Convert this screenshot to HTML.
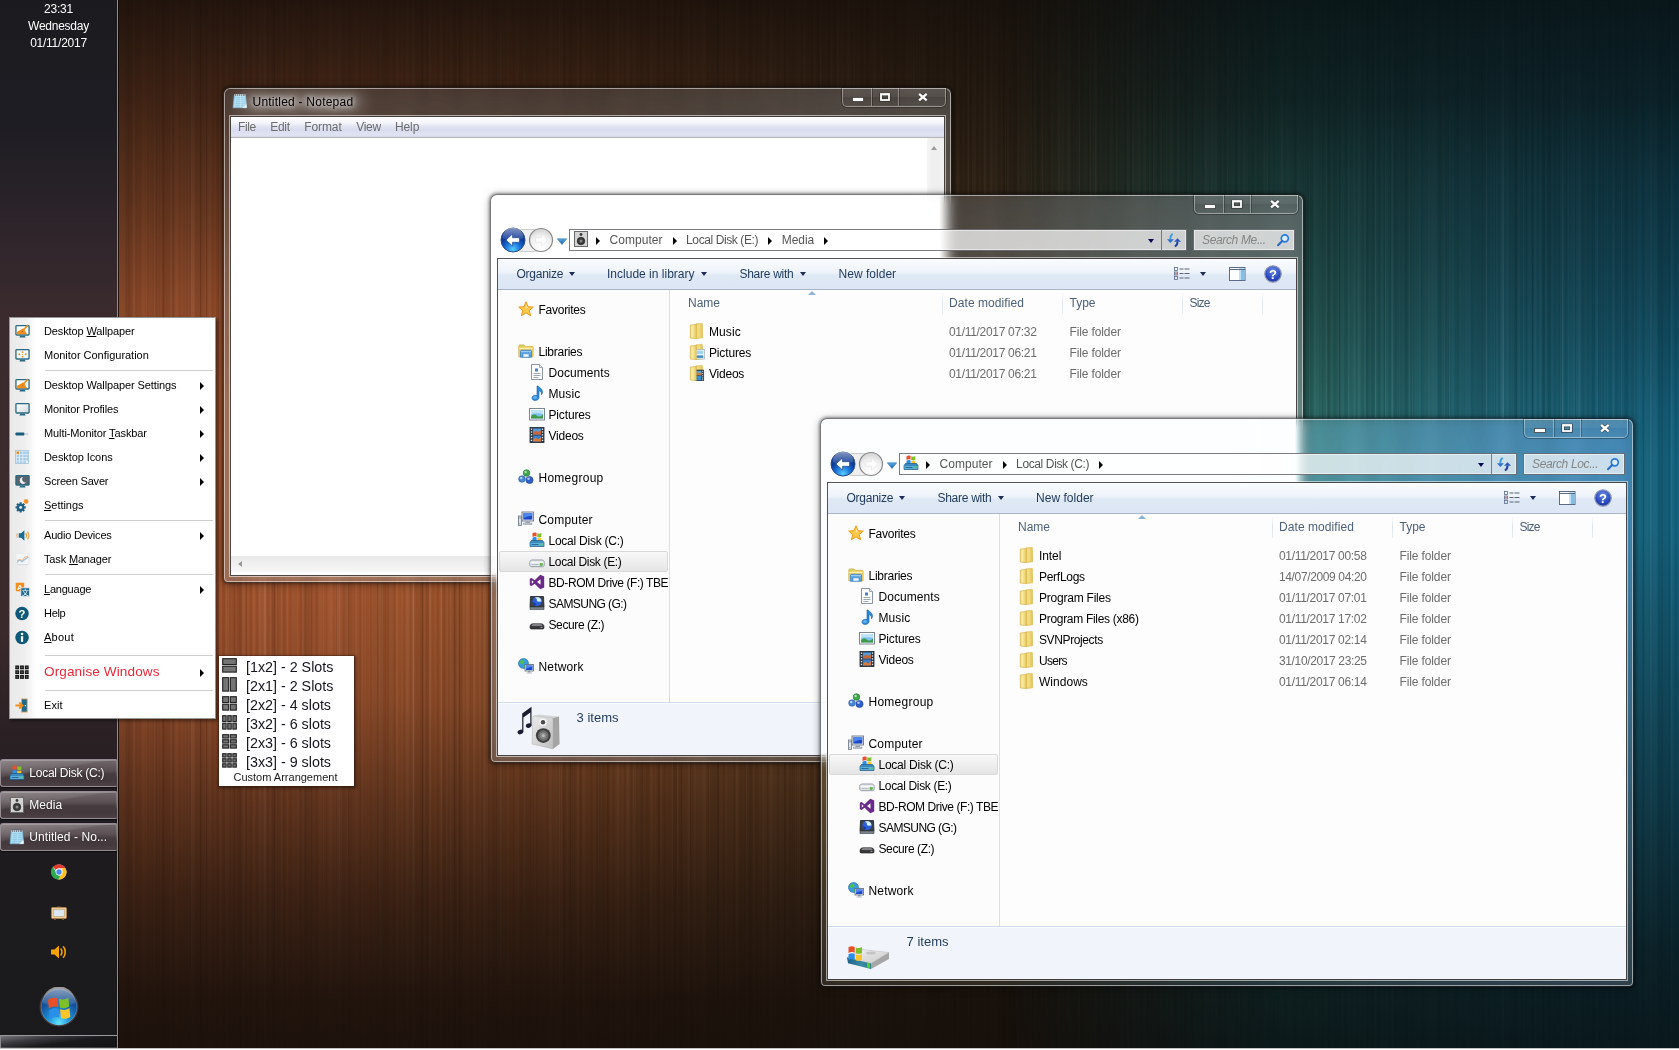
<!DOCTYPE html>
<html lang="en"><head><meta charset="utf-8"><title>Desktop</title>
<style>
*{box-sizing:border-box;margin:0;padding:0}
html,body{width:1679px;height:1050px;overflow:hidden;background:#120a07}
body{font-family:"Liberation Sans",sans-serif;font-size:12px;color:#000;position:relative}
.abs{position:absolute}
#wall{position:absolute;left:0;top:0;width:1679px;height:1050px;
 background:
  linear-gradient(180deg, rgba(19,13,9,.89) 0px, rgba(19,13,9,.68) 100px, rgba(19,13,9,.43) 200px, rgba(19,13,9,.15) 300px, rgba(19,13,9,.02) 400px, rgba(19,13,9,0) 470px, rgba(19,13,9,.03) 600px, rgba(19,13,9,.16) 700px, rgba(19,13,9,.46) 800px, rgba(19,13,9,.72) 900px, rgba(19,13,9,.9) 1000px, rgba(19,13,9,.93) 1050px),
  repeating-linear-gradient(90deg, rgba(255,255,255,0) 0px, rgba(255,255,255,.045) 1px, rgba(255,255,255,0) 2px, rgba(0,0,0,.05) 4px, rgba(0,0,0,0) 5px, rgba(255,255,255,.03) 7px, rgba(0,0,0,.06) 8px, rgba(0,0,0,0) 11px),
  repeating-linear-gradient(90deg, rgba(0,0,0,0) 0px, rgba(0,0,0,.07) 3px, rgba(255,255,255,.03) 5px, rgba(0,0,0,0) 9px, rgba(0,0,0,.05) 14px, rgba(255,255,255,.035) 15px, rgba(0,0,0,0) 17px),
  repeating-linear-gradient(90deg, transparent 0 6px, rgba(255,235,215,.065) 6px 7px, transparent 7px 15px, rgba(0,0,0,.10) 15px 16px, transparent 16px 22px, rgba(255,235,215,.045) 22px 24px, transparent 24px 37px),
  repeating-linear-gradient(90deg, transparent 0 9px, rgba(0,0,0,.09) 9px 11px, transparent 11px 28px, rgba(255,235,215,.07) 28px 29px, transparent 29px 41px, rgba(0,0,0,.08) 41px 42px, transparent 42px 59px),
  repeating-linear-gradient(90deg, rgba(0,0,0,0) 0px, rgba(0,0,0,.08) 19px, rgba(0,0,0,0) 31px, rgba(255,255,255,.03) 47px, rgba(0,0,0,.07) 53px, rgba(0,0,0,0) 73px),
  linear-gradient(90deg, #9a4c28 0px, #a8562d 350px, #914e25 600px, #684020 820px, #40301c 1000px, #33321f 1150px, #2c3a2c 1300px, #2c3a2c 1679px);}
#streaks{display:none}
#ex2{background:linear-gradient(90deg,rgba(255,255,255,0) 50%,rgba(255,255,255,.05) 85%,rgba(255,255,255,.06) 100%),rgba(235,248,255,.09);-webkit-backdrop-filter:blur(6px) brightness(1.3) saturate(1.05) hue-rotate(12deg);backdrop-filter:blur(6px) brightness(1.3) saturate(1.05) hue-rotate(12deg)}
#np{background:linear-gradient(90deg,rgba(255,255,255,0) 50%,rgba(255,255,255,.08) 85%,rgba(255,255,255,.10) 100%),rgba(255,255,255,.08);-webkit-backdrop-filter:blur(6px) brightness(1.22) saturate(.5);backdrop-filter:blur(6px) brightness(1.22) saturate(.5)}
#ex1{-webkit-backdrop-filter:blur(6px) brightness(1.2) saturate(.45);backdrop-filter:blur(6px) brightness(1.2) saturate(.45)}
#wallR{position:absolute;left:0;top:0;width:1679px;height:1050px;
 -webkit-mask-image:linear-gradient(90deg,transparent 1000px,#000 1290px);mask-image:linear-gradient(90deg,transparent 1000px,#000 1290px);
 background:
  linear-gradient(180deg, rgba(8,17,19,.93) 0px, rgba(8,17,19,.80) 100px, rgba(8,17,19,.60) 180px, rgba(8,17,19,.45) 260px, rgba(8,17,19,.27) 340px, rgba(8,17,19,.08) 410px, rgba(8,17,19,0) 460px, rgba(8,17,19,0) 530px, rgba(8,17,19,.22) 650px, rgba(8,17,19,.5) 800px, rgba(8,17,19,.8) 950px, rgba(8,17,19,.9) 1040px),
  repeating-linear-gradient(90deg, rgba(255,255,255,0) 0px, rgba(255,255,255,.045) 1px, rgba(255,255,255,0) 2px, rgba(0,0,0,.05) 4px, rgba(0,0,0,0) 5px, rgba(255,255,255,.03) 7px, rgba(0,0,0,.06) 8px, rgba(0,0,0,0) 11px),
  repeating-linear-gradient(90deg, rgba(0,0,0,0) 0px, rgba(0,0,0,.07) 3px, rgba(255,255,255,.03) 5px, rgba(0,0,0,0) 9px, rgba(0,0,0,.05) 14px, rgba(255,255,255,.035) 15px, rgba(0,0,0,0) 17px),
  repeating-linear-gradient(90deg, transparent 0 6px, rgba(255,235,215,.065) 6px 7px, transparent 7px 15px, rgba(0,0,0,.10) 15px 16px, transparent 16px 22px, rgba(255,235,215,.045) 22px 24px, transparent 24px 37px),
  repeating-linear-gradient(90deg, transparent 0 9px, rgba(0,0,0,.09) 9px 11px, transparent 11px 28px, rgba(255,235,215,.07) 28px 29px, transparent 29px 41px, rgba(0,0,0,.08) 41px 42px, transparent 42px 59px),
  repeating-linear-gradient(90deg, rgba(0,0,0,0) 0px, rgba(0,0,0,.08) 19px, rgba(0,0,0,0) 31px, rgba(255,255,255,.03) 47px, rgba(0,0,0,.07) 53px, rgba(0,0,0,0) 73px),
  linear-gradient(90deg, #2b6d66 0px, #2b6d66 1300px, #1d6575 1480px, #10617f 1679px);}
#bottomline{position:absolute;left:0;top:1048px;width:1679px;height:2px;background:linear-gradient(180deg,#9a9a9a,#fff 60%)}

/* sidebar */
#side{position:absolute;left:0;top:0;width:118px;height:1048px;border-right:1px solid #8e8c92;box-shadow:1px 0 0 rgba(14,7,4,.8);
 background:linear-gradient(180deg,#1b1b1f 0%,#1e1d23 12%,#2c242a 21%,#3b2b2e 30%,#3d2c2e 45%,#3a2a2c 60%,#2b2125 70%,#1d1b1e 80%,#1a1a1d 100%);}
#clock{position:absolute;left:0;top:1px;width:117px;text-align:center;color:#fff;font-size:12px;line-height:17px;letter-spacing:-.25px}
.tb{position:absolute;left:0;width:117px;height:28px;border:1px solid #948c90;border-right-color:transparent;border-radius:3px 0 0 3px;color:#fff;font-size:12px;
 background:linear-gradient(171deg,rgba(255,255,255,.20) 0%,rgba(255,255,255,.10) 36%,rgba(255,255,255,0) 41%),linear-gradient(180deg,#71676b 0%,#5a5054 40%,#463c40 55%,#44393d 80%,#4c4246 100%);box-shadow:inset 0 1px 0 rgba(255,255,255,.22),0 1px 1px rgba(0,0,0,.6)}
.tb .ic{position:absolute;left:8px;top:5px}
.tb .tx{position:absolute;left:28.300px;top:6px;white-space:nowrap;text-shadow:0 0 2px rgba(0,0,0,.5)}
#sidebot{position:absolute;left:0;top:1035px;width:117px;height:13px;border-top:1px solid #9a9a9e;border-left:1px solid #8a8a8e;background:linear-gradient(172deg,#77777c 0%,#3c3c40 28%,#19191c 55%,#121214 100%);box-shadow:inset 0 -1px 0 rgba(255,255,255,.18)}

/* windows */
.win{position:absolute;border-radius:7px 7px 5px 5px;border:1px solid rgba(10,8,7,.55);
 box-shadow:inset 0 0 0 1px rgba(255,255,255,.52), 0 0 3px 1px rgba(0,0,0,.35), 0 1px 9px rgba(0,0,0,.35);
 background:linear-gradient(90deg,rgba(255,255,255,0) 50%,rgba(255,255,255,.07) 80%,rgba(255,255,255,.09) 100%),rgba(255,255,255,.10);-webkit-backdrop-filter:blur(6px) brightness(1.22) saturate(.62);backdrop-filter:blur(6px) brightness(1.22) saturate(.62)}
.client{position:absolute;background:#fff;box-shadow:0 0 0 1px rgba(40,34,32,.78),0 0 0 2px rgba(255,255,255,.55)}
.caps{position:absolute;top:0;height:19px;width:104px;border:1px solid rgba(255,255,255,.38);border-top:none;border-radius:0 0 5px 5px;box-shadow:0 0 0 1px rgba(0,0,0,.3);display:flex;background:linear-gradient(180deg,rgba(255,255,255,.10) 0%,rgba(255,255,255,.06) 48%,rgba(255,255,255,0) 52%,rgba(255,255,255,.03) 100%)}
.caps div{height:100%;border-right:1px solid rgba(255,255,255,.33);box-shadow:1px 0 0 rgba(0,0,0,.25);position:relative}
.caps div:last-child{border-right:none;box-shadow:none}
.caps svg{position:absolute}
.tglow{position:absolute;background:rgba(255,255,255,.34);border-radius:8px;filter:blur(8px)}
.title{position:absolute;margin-top:1px;white-space:nowrap;font-size:12px;color:#000;text-shadow:0 0 5px rgba(255,255,255,.9),0 0 8px rgba(255,255,255,.7),0 0 12px rgba(255,255,255,.5)}

/* explorer */
.addr{position:absolute;height:22px;border:1px solid rgba(40,44,50,.62);background:rgba(255,255,255,.72);box-shadow:inset 0 0 0 1px rgba(255,255,255,.5)}
.crumb{position:absolute;top:3px;font-size:12px;color:#555;white-space:nowrap;text-align:center}
.tri{position:absolute;width:0;height:0;margin-top:-.5px;border-left:4.500px solid #000;border-top:4px solid transparent;border-bottom:4px solid transparent}
.cmd{position:absolute;left:0;top:0;width:100%;height:31px;background:linear-gradient(180deg,#fafcfe 0%,#eef3fa 45%,#dfe8f5 55%,#dde6f4 100%);border-bottom:1px solid #a8b5c8;color:#1e395b;font-size:12px}
.cmd>span{position:absolute;top:8px;white-space:nowrap}
.dn{position:absolute;width:0;height:0;border-top:4.500px solid #1c2c55;border-left:3.750px solid transparent;border-right:3.750px solid transparent}
.nav{position:absolute;left:0;top:31px;width:171px;background:#fcfcfd;overflow:hidden}
.navdiv{position:absolute;left:171px;top:31px;width:1px;background:#d6e0ee}
.ni{position:absolute;left:0;width:171px;height:21px;white-space:nowrap;font-size:12px;color:#000}
.ni .ic{position:absolute;top:2px}
.ni .tx{position:absolute;top:3px}
.ni.sel{left:1px;width:169px;border:1px solid #d9d9d9;border-radius:2px;background:linear-gradient(180deg,#f8f8f8,#e5e5e5)}
.list{position:absolute;left:172px;top:31px;background:#fdfdfe}
.hd{position:absolute;top:6px;font-size:12px;color:#4c607a;white-space:nowrap}
.hdiv{position:absolute;top:1px;width:1px;height:23px;background:linear-gradient(180deg,#fff,#dfe5ee 50%,#e8ecf2)}
.row{position:absolute;left:0;margin-top:1px;height:21px;width:100%;font-size:12px;white-space:nowrap}
.row .ic{position:absolute;left:18.500px;top:.5px}
.row .nm{position:absolute;left:39px;top:3px;color:#000}
.row .dt{position:absolute;left:279px;top:3px;color:#6d6d6d}
.row .ty{position:absolute;left:399.500px;top:3px;color:#6d6d6d}
.det{position:absolute;left:0;width:100%;height:53px;background:#f1f5fb;border-top:1px solid #cfdcec;box-shadow:inset 0 1px 0 #fafcff}
.det .tx{position:absolute;left:78.500px;top:7px;font-size:13px;color:#1e395b}

/* menus */
#menu{position:absolute;left:9px;top:317px;width:207px;height:402px;background:#fff;border:1px solid #979797;box-shadow:2px 2px 3px rgba(0,0,0,.45)}
#menu .gut{position:absolute;left:0;top:0;width:26px;height:100%;background:linear-gradient(90deg,#e9e9e9 0,#efefef 55%,#f6f6f6 80%,#fff 100%)}
.mi{position:absolute;left:34px;font-size:11px;white-space:nowrap;color:#000;letter-spacing:-.12px}
.mic{position:absolute;left:5px}
.msep{position:absolute;left:35px;width:168px;height:1px;background:#cfcfcf}
.marr{position:absolute;left:190px;width:0;height:0;border-left:4px solid #000;border-top:4px solid transparent;border-bottom:4px solid transparent}
#sub{position:absolute;left:219px;top:656px;width:135px;height:130px;background:#fff;box-shadow:0 0 0 1px rgba(60,30,15,.35),1px 1px 3px 1px rgba(0,0,0,.45)}
.si{position:absolute;left:27px;font-size:14.3px;white-space:nowrap;color:#15151f}
.sic{position:absolute;left:3.300px}
u{text-decoration:underline;text-underline-offset:1px}
</style></head>
<body>
<div id="wall"></div><div id="wallR"></div>
<div id="side"><div id="clock">23:31<br>Wednesday<br>01/11/2017</div><div class="tb" style="top:759px"><div class="ic"><svg width="16" height="16" viewBox="0 0 16 16" style="display:block;"><g transform="translate(3.5,0) scale(0.95)"><path d="M0 1.200c1.500-.9 3-.9 4.300-.2v4C3 4.300 1.500 4.300 0 5.200z" fill="#e8502a"/><path d="M5 1.300c1.300.6 2.800.7 4.300-.2v4c-1.500.9-3 .8-4.300.2z" fill="#7cc02a"/><path d="M0 6c1.500-.9 3-.9 4.300-.2v4C3 9.100 1.500 9.100 0 10z" fill="#2a8fe8"/><path d="M5 6.100c1.300.6 2.800.7 4.300-.2v4c-1.500.9-3 .8-4.300.2z" fill="#fbc52a"/></g><path d="M1 10.500l1.500-2h11l1.500 2v4H1z" fill="#3a8ac0" stroke="#1f5a88" stroke-width=".7"/><rect x="1.500" y="11" width="13" height="3" fill="#5ab0d8"/><rect x="11.500" y="11.700" width="2" height="1.600" fill="#4fd04a"/><path d="M2.500 12.500h7" stroke="#2a6a98" stroke-width="1"/></svg></div><div class="tx"><span style="letter-spacing:-0.245px">Local Disk (C:)</span></div></div><div class="tb" style="top:791px"><div class="ic"><svg width="16" height="16" viewBox="0 0 16 16" style="display:block;"><rect x="1.500" y=".5" width="13" height="15" fill="#d4d4d4" stroke="#6a6a6a" stroke-width="1"/><circle cx="8" cy="10" r="3.800" fill="#3a3a3a" stroke="#1a1a1a" stroke-width=".6"/><circle cx="8" cy="10" r="1.500" fill="#8a8a8a"/><circle cx="8" cy="3.500" r="1.400" fill="#3a3a3a"/></svg></div><div class="tx"><span style="letter-spacing:0.063px">Media</span></div></div><div class="tb" style="top:823px"><div class="ic"><svg width="16" height="16" viewBox="0 0 16 16" style="display:block;"><path d="M2.300 2.200h11.200l1.200 12.600H1z" fill="#a9dbf1" stroke="#78aecb" stroke-width=".7"/><path d="M2.400 4.600h11.300M2.200 6.600h11.700M2 8.600h12M1.900 10.600h12.300M1.700 12.600h12.700" stroke="#86c4e2" stroke-width=".7"/><path d="M4 2.500l-1.500 12M8.500 2.500v12" stroke="#c4e8f8" stroke-width=".8" opacity=".7"/><path d="M2.300 1.200h11.200v1.600H2.300z" fill="#e6eef2"/><path d="M3.300 .4v2.600M5.300 .4v2.600M7.300 .4v2.600M9.300 .4v2.600M11.300 .4v2.600M12.800 .4v2.600" stroke="#47525c" stroke-width=".8"/><path d="M10.200 14.800l4.500 0-.4-3.800z" fill="#fdfdfd"/><path d="M10.200 14.800l4.100-3.800" stroke="#9ac0d4" stroke-width=".5"/></svg></div><div class="tx"><span style="letter-spacing:0.075px">Untitled - No...</span></div></div><div class="abs" style="left:51px;top:864px"><svg width="16" height="16" viewBox="0 0 16 16" style="display:block;"><circle cx="8" cy="8" r="7.500" fill="#e8e8e8"/><path d="M8 .5a7.500 7.500 0 0 1 6.500 3.750H8A3.750 3.750 0 0 0 4.750 6.100L2 2.700A7.500 7.500 0 0 1 8 .5z" fill="#e33b2e"/><path d="M14.500 4.250A7.500 7.500 0 0 1 7.300 15.470L10.900 10A3.750 3.750 0 0 0 11.250 6.100V4.250z" fill="#fbc116"/><path d="M2 2.700L5 8.500c.5 2 2.500 3.500 4.500 3l-2.200 3.970A7.500 7.500 0 0 1 2 2.700z" fill="#2da94f"/><circle cx="8" cy="8" r="3.400" fill="#fff"/><circle cx="8" cy="8" r="2.700" fill="#4a8af4"/></svg></div><div class="abs" style="left:51px;top:906px"><svg width="16" height="14" viewBox="0 0 16 14" style="display:block;"><rect x=".5" y="1.500" width="15" height="11" rx="1" fill="#f0cc94" stroke="#b8864a" stroke-width=".7"/><rect x="2.800" y="3.600" width="10.400" height="6.800" fill="#dbe8f4" stroke="#a89878" stroke-width=".5"/><path d="M6 1.500L7.500 .3M10 1.500L8.800 .3" stroke="#c8a070" stroke-width=".6"/><rect x="3" y="12.500" width="2" height="1.200" fill="#8a6a3a"/><rect x="11" y="12.500" width="2" height="1.200" fill="#8a6a3a"/></svg></div><div class="abs" style="left:50px;top:944px"><svg width="18" height="16" viewBox="0 0 18 16" style="display:block;"><path d="M1 5.500h3.500L9 1.500v13L4.500 10.500H1z" fill="#f5a300"/><path d="M11 5c1.200 1.500 1.200 4.500 0 6" stroke="#f5a300" stroke-width="1.600" fill="none" stroke-linecap="round"/><path d="M13.500 2.800c2.300 2.700 2.300 7.700 0 10.400" stroke="#f5a300" stroke-width="1.600" fill="none" stroke-linecap="round"/></svg></div><div class="abs" style="left:39px;top:987px"><svg width="40" height="40" viewBox="0 0 40 40" style="display:block;"><defs><radialGradient id="og" cx=".5" cy=".92" r=".95"><stop offset="0" stop-color="#63e4ff"/><stop offset=".3" stop-color="#1f93d8"/><stop offset=".62" stop-color="#15539c"/><stop offset="1" stop-color="#143a72"/></radialGradient><linearGradient id="oh" x1="0" y1="0" x2="0" y2="1"><stop offset="0" stop-color="#fff" stop-opacity=".55"/><stop offset="1" stop-color="#fff" stop-opacity=".05"/></linearGradient></defs><circle cx="20" cy="20" r="18.800" fill="url(#og)" stroke="#4a3a36" stroke-width="1.200"/><circle cx="20" cy="20" r="17.800" fill="none" stroke="#9ad0f0" stroke-opacity=".35" stroke-width=".8"/><path d="M3.500 16a16.500 16.500 0 0 1 33 0c-10 4.500-23 4.500-33 0z" fill="url(#oh)"/><g transform="rotate(-6 20 20)"><g transform="translate(9.8,9) scale(2.2)"><path d="M0 1.200c1.500-.9 3-.9 4.300-.2v4C3 4.300 1.500 4.300 0 5.200z" fill="#e8502a"/><path d="M5 1.300c1.300.6 2.800.7 4.300-.2v4c-1.500.9-3 .8-4.300.2z" fill="#7cc02a"/><path d="M0 6c1.500-.9 3-.9 4.300-.2v4C3 9.100 1.500 9.100 0 10z" fill="#2a8fe8"/><path d="M5 6.100c1.300.6 2.800.7 4.300-.2v4c-1.500.9-3 .8-4.300.2z" fill="#fbc52a"/></g></g></svg></div><div id="sidebot"></div></div>
<div class="win" id="np" style="left:223px;top:87px;width:729px;height:496px"><div class="abs" style="left:8px;top:5px"><svg width="16" height="16" viewBox="0 0 16 16" style="display:block;"><path d="M2.300 2.200h11.200l1.200 12.600H1z" fill="#a9dbf1" stroke="#78aecb" stroke-width=".7"/><path d="M2.400 4.600h11.300M2.200 6.600h11.700M2 8.600h12M1.900 10.600h12.300M1.700 12.600h12.700" stroke="#86c4e2" stroke-width=".7"/><path d="M4 2.500l-1.500 12M8.500 2.500v12" stroke="#c4e8f8" stroke-width=".8" opacity=".7"/><path d="M2.300 1.200h11.200v1.600H2.300z" fill="#e6eef2"/><path d="M3.300 .4v2.600M5.300 .4v2.600M7.300 .4v2.600M9.300 .4v2.600M11.300 .4v2.600M12.800 .4v2.600" stroke="#47525c" stroke-width=".8"/><path d="M10.200 14.800l4.500 0-.4-3.800z" fill="#fdfdfd"/><path d="M10.200 14.800l4.100-3.800" stroke="#9ac0d4" stroke-width=".5"/></svg></div><div class="abs" style="left:0;top:0;width:100%;height:27px;overflow:hidden;border-radius:6px 6px 0 0"><div class="tglow" style="left:14px;top:6px;width:124px;height:16px"></div></div><div class="title" style="left:28.5px;top:6px;letter-spacing:0.227px">Untitled - Notepad</div><div class="caps" style="left:618px"><svg width="103" height="19" style="left:0;top:0"><rect x="9.500" y="9.500" width="11" height="4" fill="#fff" stroke="#303030" stroke-opacity=".7" stroke-width="1"/><rect x="38" y="6.500" width="8" height="5.500" fill="none" stroke="#303030" stroke-opacity=".7" stroke-width="3.600"/><rect x="38" y="6.500" width="8" height="5.500" fill="none" stroke="#fff" stroke-width="1.800"/><rect x="37.100" y="5.200" width="9.800" height="1.800" fill="#fff"/><path d="M76.100 5.900l7.600 6.500M83.700 5.900l-7.600 6.500" stroke="#303030" stroke-opacity=".7" stroke-width="3.800"/><path d="M76.100 5.900l7.600 6.500M83.700 5.900l-7.600 6.500" stroke="#fff" stroke-width="2.400"/></svg><div style="width:29px"></div><div style="width:27px"></div><div style="width:46px"></div></div><div class="client" style="left:7px;top:29px;width:713px;height:458px"><div class="abs" style="left:0;top:0;width:100%;height:21px;background:linear-gradient(180deg,#ffffff 0%,#f5f6fb 28%,#dfe3f1 50%,#d8dcee 62%,#dfe3f2 90%,#d4d8e8 100%);border-bottom:1px solid #b6b6b6"></div><div class="abs" style="left:7px;top:3px;color:#6d6d6d;font-size:12px;letter-spacing:-0.384px">File</div><div class="abs" style="left:39.30000000000001px;top:3px;color:#6d6d6d;font-size:12px;letter-spacing:-0.320px">Edit</div><div class="abs" style="left:73.19999999999999px;top:3px;color:#6d6d6d;font-size:12px;letter-spacing:-0.084px">Format</div><div class="abs" style="left:125.30000000000001px;top:3px;color:#6d6d6d;font-size:12px;letter-spacing:-0.324px">View</div><div class="abs" style="left:164px;top:3px;color:#6d6d6d;font-size:12px;letter-spacing:-0.120px">Help</div><div class="abs" style="left:696px;top:21px;width:17px;height:418px;background:linear-gradient(90deg,#f6f6f6,#efefef 30%,#f0f0f0)"></div><div class="abs" style="left:699.500px;top:29px;width:0;height:0;border-bottom:4px solid #9a9a9a;border-left:3.500px solid transparent;border-right:3.500px solid transparent"></div><div class="abs" style="left:0;top:439px;width:696px;height:16px;background:linear-gradient(180deg,#e9e9e9,#efefef 40%,#f6f6f6)"></div><div class="abs" style="left:696px;top:439px;width:17px;height:19px;background:#f3f3f3"></div><div class="abs" style="left:7px;top:444px;width:0;height:0;border-right:4px solid #9a9a9a;border-top:3.500px solid transparent;border-bottom:3.500px solid transparent"></div></div></div>
<div class="win" id="ex1" style="left:490px;top:194px;width:814px;height:569px"><div class="caps" style="left:703px"><svg width="103" height="19" style="left:0;top:0"><rect x="9.500" y="9.500" width="11" height="4" fill="#fff" stroke="#303030" stroke-opacity=".7" stroke-width="1"/><rect x="38" y="6.500" width="8" height="5.500" fill="none" stroke="#303030" stroke-opacity=".7" stroke-width="3.600"/><rect x="38" y="6.500" width="8" height="5.500" fill="none" stroke="#fff" stroke-width="1.800"/><rect x="37.100" y="5.200" width="9.800" height="1.800" fill="#fff"/><path d="M76.100 5.900l7.600 6.500M83.700 5.900l-7.600 6.500" stroke="#303030" stroke-opacity=".7" stroke-width="3.800"/><path d="M76.100 5.900l7.600 6.500M83.700 5.900l-7.600 6.500" stroke="#fff" stroke-width="2.400"/></svg><div style="width:29px"></div><div style="width:27px"></div><div style="width:46px"></div></div><div class="abs" style="left:21px;top:34px;width:32px;height:23px;background:rgba(228,228,228,.55);border-radius:11px;border:1px solid rgba(160,160,160,.45)"></div><div class="abs" style="left:9px;top:32px"><svg width="26" height="26" viewBox="0 0 26 26" style="display:block;"><defs><radialGradient id="bg1" cx=".5" cy=".9" r=".9"><stop offset="0" stop-color="#55d0ff"/><stop offset=".35" stop-color="#1a6fd8"/><stop offset=".62" stop-color="#0d3a9c"/><stop offset="1" stop-color="#1a3a88"/></radialGradient><linearGradient id="bh" x1="0" y1="0" x2="0" y2="1"><stop offset="0" stop-color="#fff" stop-opacity=".85"/><stop offset="1" stop-color="#fff" stop-opacity=".15"/></linearGradient></defs><circle cx="13" cy="13" r="12" fill="url(#bg1)" stroke="#2a4a8a" stroke-width="1"/><path d="M2.500 11a10.500 10.500 0 0 1 21 0c-6 3-15 3-21 0z" fill="url(#bh)" opacity=".55"/><path d="M6 13l6.500-6v3.700h7v4.600h-7V19z" fill="#fff" stroke="#1a3a7a" stroke-width=".6" stroke-linejoin="round"/></svg></div><div class="abs" style="left:37px;top:32px"><svg width="26" height="26" viewBox="0 0 26 26" style="display:block;"><defs><radialGradient id="fg1" cx=".5" cy=".8" r=".8"><stop offset="0" stop-color="#fff"/><stop offset=".6" stop-color="#f0f0f0"/><stop offset="1" stop-color="#d0d0d0"/></radialGradient></defs><circle cx="13" cy="13" r="11.500" fill="url(#fg1)" stroke="#8a8a8a" stroke-width="1.200"/><path d="M20 13l-6.500-6v3.700h-6v4.600h6V19z" fill="#fcfcfc" stroke="#e6e6e6" stroke-width=".7" stroke-linejoin="round"/></svg></div><div class="abs" style="left:66px;top:43px"><svg width="10" height="7" viewBox="0 0 10 7" style="display:block;"><defs><linearGradient id="ndg" x1="0" y1="0" x2="0" y2="1"><stop offset="0" stop-color="#5ab0ea"/><stop offset="1" stop-color="#1a5ab0"/></linearGradient></defs><path d="M.3 .8h9.400L5 6.500z" fill="url(#ndg)" stroke="#1f5fa8" stroke-width=".5"/></svg></div><div class="addr" style="left:78px;top:34px;width:618px"><div class="abs" style="left:3px;top:1px"><svg width="16" height="16" viewBox="0 0 16 16" style="display:block;"><rect x="1.500" y=".5" width="13" height="15" fill="#d4d4d4" stroke="#6a6a6a" stroke-width="1"/><circle cx="8" cy="10" r="3.800" fill="#3a3a3a" stroke="#1a1a1a" stroke-width=".6"/><circle cx="8" cy="10" r="1.500" fill="#8a8a8a"/><circle cx="8" cy="3.500" r="1.400" fill="#3a3a3a"/></svg></div><div class="tri" style="left:26px;top:7px"></div><div class="crumb" style="left:39.5px;width:53px;letter-spacing:0.039px">Computer</div><div class="tri" style="left:102.60000000000002px;top:7px"></div><div class="crumb" style="left:116.10000000000002px;width:72px;letter-spacing:-0.401px">Local Disk (E:)</div><div class="tri" style="left:198.20000000000005px;top:7px"></div><div class="crumb" style="left:211.70000000000005px;width:32.5px;letter-spacing:-0.037px">Media</div><div class="tri" style="left:254.30000000000007px;top:7px"></div><div class="abs" style="left:578px;top:9px;width:0;height:0;border-top:4px solid #0a0a52;border-left:3.500px solid transparent;border-right:3.500px solid transparent"></div><div class="abs" style="left:591px;top:0;width:1px;height:20px;background:rgba(90,94,100,.75)"></div><div class="abs" style="left:596px;top:2px"><svg width="16" height="16" viewBox="0 0 16 16" style="display:block;"><path d="M6.800 2c-1.700.7-2.500 2.500-2.500 5.500" stroke="#4a9ce0" stroke-width="2" fill="none"/><path d="M.9 7.200h7l-3.500 3.900z" fill="#2f72cc"/><path d="M11.500 9.500c0 2.700-.9 4.300-2.700 4.900" stroke="#26429c" stroke-width="2" fill="none"/><path d="M8 9.800h7l-3.500-3.600z" fill="#2a56c0"/></svg></div></div><div class="addr" style="left:702px;top:34px;width:102px"><div class="abs" style="left:8px;top:3px;font-style:italic;color:#858585;font-size:12px;white-space:nowrap;letter-spacing:-.35px">Search Me...</div><div class="abs" style="left:81px;top:2px"><svg width="16" height="16" viewBox="0 0 16 16" style="display:block;"><circle cx="9.800" cy="6.300" r="3.500" fill="#dcecfb" stroke="#2a7ad8" stroke-width="1.700"/><path d="M7.200 9L3 13.300" stroke="#2a6ac8" stroke-width="2" stroke-linecap="round"/></svg></div></div><div class="client" style="left:7px;top:64px;width:798px;height:496px"><div class="cmd"><span style="left:18.5px"><span style="letter-spacing:-0.249px">Organize</span></span><div class="dn" style="left:71px;top:13px"></div><span style="left:109px"><span style="letter-spacing:0.007px">Include in library</span></span><div class="dn" style="left:203px;top:13px"></div><span style="left:241.5px"><span style="letter-spacing:-0.280px">Share with</span></span><div class="dn" style="left:302px;top:13px"></div><span style="left:340.5px"><span style="letter-spacing:0.024px">New folder</span></span><div class="abs" style="left:676px;top:8px"><svg width="17" height="14" viewBox="0 0 17 14" style="display:block;"><g fill="none" stroke="#5a6a8a" stroke-width=".8"><rect x=".5" y=".5" width="3" height="3"/><rect x=".5" y="5" width="3" height="3"/><rect x=".5" y="9.500" width="3" height="3"/></g><rect x="1.300" y="5.800" width="1.400" height="1.400" fill="#d05a3a"/><g stroke="#5a6478" stroke-width="1"><path d="M5.500 2h4M10.500 2h5M5.500 6.500h4M10.500 6.500h5M5.500 11h4M10.500 11h5"/></g></svg></div><div class="dn" style="left:702px;top:13px"></div><div class="abs" style="left:731px;top:7px"><svg width="17" height="16" viewBox="0 0 17 16" style="display:block;"><rect x=".5" y="1.500" width="15.500" height="13" fill="#fff" stroke="#5a6a88" stroke-width="1"/><rect x="10" y="2.500" width="5.500" height="11.500" fill="#7fc0ea"/><rect x="10" y="2.500" width="2" height="11.500" fill="#bfe2f8"/><path d="M.5 3.500h15.500" stroke="#5a6a88" stroke-width="1"/></svg></div><div class="abs" style="left:766px;top:6px"><svg width="18" height="18" viewBox="0 0 18 18" style="display:block;"><defs><radialGradient id="hg" cx=".5" cy=".3" r=".8"><stop offset="0" stop-color="#6a8ae8"/><stop offset=".6" stop-color="#2a4ac0"/><stop offset="1" stop-color="#1a2a88"/></radialGradient></defs><circle cx="9" cy="9" r="8.200" fill="url(#hg)" stroke="#8a96b8" stroke-width="1.200"/><text x="9" y="13.500" text-anchor="middle" font-family="Liberation Sans" font-weight="bold" font-size="13" fill="#fff">?</text></svg></div></div><div class="nav" style="height:412px"><div class="ni" style="top:9px"><div class="ic" style="left:20px;top:2px"><svg width="16" height="16" viewBox="0 0 16 16" style="display:block;"><path d="M8 .8l2.1 4.9 5.2.4-4 3.4 1.3 5.2L8 11.9l-4.6 2.8 1.3-5.2-4-3.4 5.2-.4z" fill="#fdc848" stroke="#e89a1c" stroke-width="1" stroke-linejoin="round"/><path d="M8 3.2l1.3 3 .9.1-2.2 1.5z" fill="#fff3c0" opacity=".8"/></svg></div><div class="tx" style="left:40.5px;top:4px"><span style="letter-spacing:-0.261px">Favorites</span></div></div><div class="ni" style="top:51px"><div class="ic" style="left:20px;top:2px"><svg width="16" height="16" viewBox="0 0 16 16" style="display:block;"><path d="M.8 2.800c0-.5.400-.9.900-.9h4.300l1.200 1.500h7c.5 0 .9.400.9.900v9.500H.8z" fill="#f3d66a" stroke="#cfa83c" stroke-width=".7"/><path d="M1.500 2.600h4.200l.8 1H1.500z" fill="#a8cc5a"/><path d="M1.300 5.500h13.400" stroke="#fdf0b4" stroke-width=".9"/><path d="M2.500 8.200c0-.6.500-1 1-1h9c.5 0 1 .4 1 1v6H2.500z" fill="#5aa6e6" stroke="#2f78c4" stroke-width=".7"/><path d="M3 8.600h10" stroke="#a8d4f8" stroke-width=".9"/><path d="M5 10.800h6v3.400H5z" fill="#eef6fd" stroke="#3a82cc" stroke-width=".6"/></svg></div><div class="tx" style="left:40.5px;top:4px"><span style="letter-spacing:-0.247px">Libraries</span></div></div><div class="ni" style="top:72px"><div class="ic" style="left:31px;top:2px"><svg width="16" height="16" viewBox="0 0 16 16" style="display:block;"><path d="M2.5 .5h8l3 3v12h-11z" fill="#fff" stroke="#8a95a3" stroke-width="1"/><path d="M10.5 .5v3h3" fill="#e4e9ef" stroke="#8a95a3" stroke-width=".8"/><rect x="6" y="4.5" width="3" height="3" fill="#4a7fd0"/><path d="M4.5 9.5h7M4.5 11.5h7M4.5 13.5h5" stroke="#9aa5b5" stroke-width="1"/></svg></div><div class="tx" style="left:50.5px;top:4px"><span style="letter-spacing:0.067px">Documents</span></div></div><div class="ni" style="top:93px"><div class="ic" style="left:31px;top:2px"><svg width="16" height="16" viewBox="0 0 16 16" style="display:block;"><path d="M9 1c1.5 2 4.5 2.500 4.500 6 0 1-.3 2-1 2.800.5-2.800-1.500-4-2.500-4.300V12.500c0 1.700-1.800 3-3.800 3S3 14.500 3 13s1.500-2.700 3.500-2.700c.6 0 1 .1 1.500.3V1z" fill="#2e8bdc" stroke="#1660a8" stroke-width=".6"/><ellipse cx="6" cy="12.500" rx="2" ry="1.200" fill="#7cc4f5" opacity=".7"/></svg></div><div class="tx" style="left:50.5px;top:4px"><span style="letter-spacing:0.093px">Music</span></div></div><div class="ni" style="top:114px"><div class="ic" style="left:31px;top:2px"><svg width="16" height="16" viewBox="0 0 16 16" style="display:block;"><rect x=".5" y="2.500" width="15" height="11.500" fill="#fff" stroke="#7c8794" stroke-width="1"/><rect x="2" y="4" width="12" height="8.500" fill="#7ec0ee"/><path d="M2 10.500c2-2.500 4-2.500 6-.8s4 .8 6-1.200v4H2z" fill="#3f9b4a"/><path d="M2 8c3-1 9-1 12 0V4H2z" fill="#bfe2f8"/></svg></div><div class="tx" style="left:50.5px;top:4px"><span style="letter-spacing:-0.156px">Pictures</span></div></div><div class="ni" style="top:135px"><div class="ic" style="left:31px;top:2px"><svg width="16" height="16" viewBox="0 0 16 16" style="display:block;"><rect x="1" y=".5" width="14" height="15" fill="#2b3644" stroke="#1a222c" stroke-width=".8"/><rect x="4" y="1.500" width="8" height="6" fill="#4f9de0"/><rect x="4" y="8.500" width="8" height="6" fill="#3c7fc8"/><path d="M4 5.500l3-2 2 1.500 3-2v4.500H4z" fill="#c8673a"/><path d="M4 13l2.500-2.500 2.500 2 3-2.500v4.500H4z" fill="#d87a3c"/><g fill="#dfe6ee"><rect x="1.800" y="1.500" width="1.400" height="1.400"/><rect x="1.800" y="4.300" width="1.400" height="1.400"/><rect x="1.800" y="7.100" width="1.400" height="1.400"/><rect x="1.800" y="9.900" width="1.400" height="1.400"/><rect x="1.800" y="12.700" width="1.400" height="1.400"/><rect x="12.800" y="1.500" width="1.400" height="1.400"/><rect x="12.800" y="4.300" width="1.400" height="1.400"/><rect x="12.800" y="7.100" width="1.400" height="1.400"/><rect x="12.800" y="9.900" width="1.400" height="1.400"/><rect x="12.800" y="12.700" width="1.400" height="1.400"/></g></svg></div><div class="tx" style="left:50.5px;top:4px"><span style="letter-spacing:-0.229px">Videos</span></div></div><div class="ni" style="top:177px"><div class="ic" style="left:20px;top:2px"><svg width="16" height="16" viewBox="0 0 16 16" style="display:block;"><circle cx="8.500" cy="4" r="3.300" fill="#3fa64a" stroke="#1f7030" stroke-width=".6"/><circle cx="4" cy="10" r="3.300" fill="#4a86d8" stroke="#2258a8" stroke-width=".6"/><circle cx="11.500" cy="11" r="3.600" fill="#2f5fc8" stroke="#1a3c90" stroke-width=".6"/><circle cx="7.600" cy="3" r="1.200" fill="#c8f0c8" opacity=".8"/><circle cx="3.200" cy="9" r="1.200" fill="#d4e6fb" opacity=".8"/><circle cx="10.500" cy="9.800" r="1.300" fill="#cfdcf8" opacity=".8"/></svg></div><div class="tx" style="left:40.5px;top:4px"><span style="letter-spacing:0.255px">Homegroup</span></div></div><div class="ni" style="top:219px"><div class="ic" style="left:20px;top:2px"><svg width="16" height="16" viewBox="0 0 16 16" style="display:block;"><rect x="4" y="1" width="11.500" height="9" fill="#e8edf2" stroke="#6a7686" stroke-width=".9"/><rect x="5.300" y="2.300" width="9" height="6.300" fill="#1c48c8"/><path d="M5.300 2.300h9v2.500c-3 0-6 1-9 2.500z" fill="#4f86ee"/><rect x="7.500" y="10.500" width="4.500" height="1.500" fill="#9aa5b3"/><rect x="5.500" y="12" width="8.500" height="1.500" fill="#c8d0da" stroke="#7c8896" stroke-width=".5"/><rect x=".5" y="5" width="3" height="9.500" fill="#dfe5ec" stroke="#6a7686" stroke-width=".8"/><rect x="1.200" y="6.500" width="1.600" height=".8" fill="#5a6a7a"/><rect x="1.200" y="12.300" width="1" height="1" fill="#3ec04a"/></svg></div><div class="tx" style="left:40.5px;top:4px"><span style="letter-spacing:0.189px">Computer</span></div></div><div class="ni" style="top:240px"><div class="ic" style="left:31px;top:2px"><svg width="16" height="16" viewBox="0 0 16 16" style="display:block;"><g transform="translate(3.5,0) scale(0.95)"><path d="M0 1.200c1.500-.9 3-.9 4.300-.2v4C3 4.300 1.500 4.300 0 5.200z" fill="#e8502a"/><path d="M5 1.300c1.300.6 2.800.7 4.300-.2v4c-1.500.9-3 .8-4.300.2z" fill="#7cc02a"/><path d="M0 6c1.500-.9 3-.9 4.300-.2v4C3 9.100 1.500 9.100 0 10z" fill="#2a8fe8"/><path d="M5 6.100c1.300.6 2.800.7 4.300-.2v4c-1.500.9-3 .8-4.300.2z" fill="#fbc52a"/></g><path d="M1 10.500l1.500-2h11l1.500 2v4H1z" fill="#3a8ac0" stroke="#1f5a88" stroke-width=".7"/><rect x="1.500" y="11" width="13" height="3" fill="#5ab0d8"/><rect x="11.500" y="11.700" width="2" height="1.600" fill="#4fd04a"/><path d="M2.500 12.500h7" stroke="#2a6a98" stroke-width="1"/></svg></div><div class="tx" style="left:50.5px;top:4px"><span style="letter-spacing:-0.245px">Local Disk (C:)</span></div></div><div class="ni sel" style="top:261px"><div class="ic" style="left:29px;top:1px"><svg width="16" height="16" viewBox="0 0 16 16" style="display:block;"><path d="M.8 9.500c0-1.500 1-2.500 2.500-2.500h9.400c1.500 0 2.500 1 2.500 2.500v2.500c0 1-.7 1.700-1.700 1.700h-11c-1 0-1.700-.7-1.700-1.700z" fill="#e6e9ec" stroke="#8a929c" stroke-width=".9"/><path d="M1.500 9.800h13" stroke="#fff" stroke-width="1"/><rect x="11" y="10.500" width="2.500" height="2" fill="#5ac83c" stroke="#3a8a28" stroke-width=".4"/><path d="M2.500 11.500h7" stroke="#b8bec6" stroke-width="1.200"/></svg></div><div class="tx" style="left:48.5px;top:3px"><span style="letter-spacing:-0.335px">Local Disk (E:)</span></div></div><div class="ni" style="top:282px"><div class="ic" style="left:31px;top:2px"><svg width="16" height="16" viewBox="0 0 16 16" style="display:block;"><path d="M11.300 .8L15.200 2.400v11.200L11.300 15.200 5.600 9.800 2.600 12.100.8 11.200V4.800l1.800-.9 3 2.300zM11.500 5.200L8.100 8l3.400 2.800zM2.800 6.300v3.400L4.700 8z" fill="#6a2a8a" fill-rule="evenodd"/></svg></div><div class="tx" style="left:50.5px;top:4px"><span style="letter-spacing:-0.417px">BD-ROM Drive (F:) TBE</span></div></div><div class="ni" style="top:303px"><div class="ic" style="left:31px;top:2px"><svg width="16" height="16" viewBox="0 0 16 16" style="display:block;"><path d="M1.500 1.500h13l.5 10.500H1z" fill="#3a4048" stroke="#1c2026" stroke-width=".8"/><path d="M1 12h14v2.500H1z" fill="#7a828c" stroke="#3a4048" stroke-width=".6"/><circle cx="8" cy="6.500" r="4.600" fill="#2a5fd8"/><path d="M8 1.900a4.600 4.600 0 0 1 4.600 4.600c-2 .5-3.500-.5-4.600-2s-2-2-3-.8A4.600 4.600 0 0 1 8 1.900z" fill="#bfe0f5"/><circle cx="9.500" cy="5" r="1.800" fill="#eaf6ff" opacity=".9"/><path d="M4 7l3 1.500-1 2.300A4.600 4.600 0 0 1 4 7z" fill="#1438a8"/></svg></div><div class="tx" style="left:50.5px;top:4px"><span style="letter-spacing:-0.556px">SAMSUNG (G:)</span></div></div><div class="ni" style="top:324px"><div class="ic" style="left:31px;top:2px"><svg width="16" height="16" viewBox="0 0 16 16" style="display:block;"><path d="M1 10.500c0-1.500 1.200-2.700 3-2.700h8c1.800 0 3 1.200 3 2.700v1.200c0 .8-.5 1.300-1.300 1.300H2.300c-.8 0-1.300-.5-1.300-1.300z" fill="#3a3a3c" stroke="#1a1a1c" stroke-width=".6"/><path d="M2.500 9.500c.5-.8 1.200-1 2-1h7c.8 0 1.500.2 2 1z" fill="#c8ccd0"/><rect x="11.500" y="10.800" width="2" height="1.200" fill="#8a8f96"/></svg></div><div class="tx" style="left:50.5px;top:4px"><span style="letter-spacing:-0.392px">Secure (Z:)</span></div></div><div class="ni" style="top:366px"><div class="ic" style="left:20px;top:2px"><svg width="16" height="16" viewBox="0 0 16 16" style="display:block;"><circle cx="5.500" cy="5.500" r="5" fill="#3a9ae0" stroke="#1f6ab0" stroke-width=".6"/><path d="M3 2c1.500-.5 3 0 3.500 1.500S5 6 3.500 6 1.500 4 3 2zM6 7.500c1-.5 2.500 0 2.500 1S7 10.500 6 10s-1-2 0-2.500z" fill="#4fc04a"/><rect x="7" y="6.500" width="8.500" height="6.500" fill="#e4e9ef" stroke="#5a6674" stroke-width=".8"/><rect x="8" y="7.500" width="6.500" height="4.500" fill="#1c48d0"/><path d="M8 7.500h6.500v1.500c-2 0-4.500.8-6.500 2z" fill="#4f86ee"/><rect x="10" y="13" width="2.500" height="1.500" fill="#8a95a3"/><rect x="8.500" y="14.500" width="5.500" height="1" fill="#b8c0ca"/></svg></div><div class="tx" style="left:40.5px;top:4px"><span style="letter-spacing:0.170px">Network</span></div></div></div><div class="navdiv" style="height:412px"></div><div class="list" style="width:626px;height:412px"><div class="hd" style="left:18px"><span style="letter-spacing:-0.003px">Name</span></div><div class="hd" style="left:279px"><span style="letter-spacing:0.074px">Date modified</span></div><div class="hd" style="left:399.5px"><span style="letter-spacing:-0.004px">Type</span></div><div class="hd" style="left:519.5px"><span style="letter-spacing:-0.836px">Size</span></div><div class="hdiv" style="left:272px"></div><div class="hdiv" style="left:392px"></div><div class="hdiv" style="left:512px"></div><div class="hdiv" style="left:592px"></div><div class="abs" style="left:138px;top:1px;width:0;height:0;border-bottom:4px solid #8fb2d6;border-left:4px solid transparent;border-right:4px solid transparent"></div><div class="row" style="top:31px"><div class="ic"><svg width="16" height="16" viewBox="0 0 16 16" style="display:block;"><defs><linearGradient id="fld1" x1="0" x2="1"><stop offset="0" stop-color="#efd777"/><stop offset=".35" stop-color="#f9eba4"/><stop offset=".7" stop-color="#f1db7c"/><stop offset="1" stop-color="#e8c95e"/></linearGradient></defs><path d="M7 .9l6.300-.3.300 14.200-6.600.6z" fill="#f1db80" stroke="#d8b64a" stroke-width=".7"/><path d="M11.300 1.200l1.600-.1.200 13.300-1.800.2z" fill="#e2c258" opacity=".7"/><path d="M1.300 2.100L7.200 1.400v14.200L1.300 15z" fill="url(#fld1)" stroke="#d6b34a" stroke-width=".7"/></svg></div><div class="nm"><span style="letter-spacing:0.093px">Music</span></div><div class="dt"><span style="letter-spacing:-0.315px">01/11/2017 07:32</span></div><div class="ty"><span style="letter-spacing:-0.126px">File folder</span></div></div><div class="row" style="top:52px"><div class="ic"><svg width="16" height="16" viewBox="0 0 16 16" style="display:block;"><defs><linearGradient id="fld2" x1="0" x2="1"><stop offset="0" stop-color="#efd777"/><stop offset=".35" stop-color="#f9eba4"/><stop offset=".7" stop-color="#f1db7c"/><stop offset="1" stop-color="#e8c95e"/></linearGradient></defs><path d="M7 .9l6.300-.3.300 14.200-6.600.6z" fill="#f1db80" stroke="#d8b64a" stroke-width=".7"/><path d="M11.300 1.200l1.600-.1.200 13.300-1.800.2z" fill="#e2c258" opacity=".7"/><rect x="6.500" y="5.500" width="8.800" height="9.500" fill="#fff" stroke="#9aa4b0" stroke-width=".7"/><rect x="7.500" y="6.600" width="6.800" height="3.400" fill="#9fd4f2"/><rect x="7.500" y="10" width="6.800" height="1.600" fill="#e8f4fa"/><rect x="7.500" y="11.400" width="6.800" height="2.500" fill="#3f8fc0"/><path d="M1.300 2.100L7.200 1.400v14.200L1.300 15z" fill="url(#fld2)" stroke="#d6b34a" stroke-width=".7"/></svg></div><div class="nm"><span style="letter-spacing:-0.156px">Pictures</span></div><div class="dt"><span style="letter-spacing:-0.315px">01/11/2017 06:21</span></div><div class="ty"><span style="letter-spacing:-0.126px">File folder</span></div></div><div class="row" style="top:73px"><div class="ic"><svg width="16" height="16" viewBox="0 0 16 16" style="display:block;"><defs><linearGradient id="fld3" x1="0" x2="1"><stop offset="0" stop-color="#efd777"/><stop offset=".35" stop-color="#f9eba4"/><stop offset=".7" stop-color="#f1db7c"/><stop offset="1" stop-color="#e8c95e"/></linearGradient></defs><path d="M7 .9l6.300-.3.300 14.200-6.600.6z" fill="#f1db80" stroke="#d8b64a" stroke-width=".7"/><path d="M11.300 1.200l1.600-.1.200 13.300-1.800.2z" fill="#e2c258" opacity=".7"/><rect x="6.500" y="5" width="8.300" height="10.800" fill="#2b3440" stroke="#1a222c" stroke-width=".5"/><rect x="7" y="5.800" width="5.500" height="4.500" fill="#4fa5e0"/><rect x="7" y="11" width="5.500" height="4.300" fill="#2f8fd0"/><path d="M7 9l2-2 1.500 1.500 2-1.500v3.300H7z" fill="#c87a4a"/><g fill="#e4e9ee"><rect x="13.200" y="5.800" width="1" height="1.100"/><rect x="13.200" y="8" width="1" height="1.100"/><rect x="13.200" y="10.200" width="1" height="1.100"/><rect x="13.200" y="12.400" width="1" height="1.100"/><rect x="13.200" y="14.300" width="1" height="1"/></g><path d="M1.300 2.100L7.200 1.400v14.200L1.300 15z" fill="url(#fld3)" stroke="#d6b34a" stroke-width=".7"/></svg></div><div class="nm"><span style="letter-spacing:-0.229px">Videos</span></div><div class="dt"><span style="letter-spacing:-0.315px">01/11/2017 06:21</span></div><div class="ty"><span style="letter-spacing:-0.126px">File folder</span></div></div></div><div class="det" style="top:443px"><div class="abs" style="left:18px;top:2px"><svg width="46" height="46" viewBox="0 0 46 46" style="display:block;"><defs><linearGradient id="spf" x1="0" y1="0" x2="1" y2="1"><stop offset="0" stop-color="#ececec"/><stop offset="1" stop-color="#bdbdbd"/></linearGradient></defs><g fill="#1c1c30"><ellipse cx="4.400" cy="27" rx="2.900" ry="2.200" transform="rotate(-20 4.400 27)"/><ellipse cx="12.700" cy="20.600" rx="2.900" ry="2.200" transform="rotate(-20 12.700 20.600)"/><path d="M6.200 26.800V8.600l9.300-6.800v18.400h-1.200V7.400L7.400 12.400v14.400z"/></g><path d="M17 11l6-1.600 20 2.100-6 1.500z" fill="#d6d6d6"/><path d="M37 13l6-1.500.6 27.500-6.600 5z" fill="#a4a4a4"/><path d="M17 11l20 2v31l-21-5z" fill="url(#spf)" stroke="#b0b0b0" stroke-width=".5"/><circle cx="27" cy="17.300" r="3.700" fill="#f6f6f6"/><circle cx="27" cy="17.300" r="2.200" fill="#4a4a4a"/><circle cx="27.300" cy="30.600" r="7.400" fill="#3e3e3e"/><circle cx="27.300" cy="30.600" r="5.300" fill="#6e6e6e"/><circle cx="27.300" cy="30.600" r="3.200" fill="#8a8a8a"/><circle cx="27.300" cy="30.600" r="1.500" fill="#b8b8b8"/></svg></div><div class="tx"><span style="letter-spacing:0.028px">3 items</span></div></div></div></div>
<div class="win" id="ex2" style="left:820px;top:418px;width:814px;height:569px"><div class="caps" style="left:703px"><svg width="103" height="19" style="left:0;top:0"><rect x="9.500" y="9.500" width="11" height="4" fill="#fff" stroke="#303030" stroke-opacity=".7" stroke-width="1"/><rect x="38" y="6.500" width="8" height="5.500" fill="none" stroke="#303030" stroke-opacity=".7" stroke-width="3.600"/><rect x="38" y="6.500" width="8" height="5.500" fill="none" stroke="#fff" stroke-width="1.800"/><rect x="37.100" y="5.200" width="9.800" height="1.800" fill="#fff"/><path d="M76.100 5.900l7.600 6.500M83.700 5.900l-7.600 6.500" stroke="#303030" stroke-opacity=".7" stroke-width="3.800"/><path d="M76.100 5.900l7.600 6.500M83.700 5.900l-7.600 6.500" stroke="#fff" stroke-width="2.400"/></svg><div style="width:29px"></div><div style="width:27px"></div><div style="width:46px"></div></div><div class="abs" style="left:21px;top:34px;width:32px;height:23px;background:rgba(228,228,228,.55);border-radius:11px;border:1px solid rgba(160,160,160,.45)"></div><div class="abs" style="left:9px;top:32px"><svg width="26" height="26" viewBox="0 0 26 26" style="display:block;"><defs><radialGradient id="bg1" cx=".5" cy=".9" r=".9"><stop offset="0" stop-color="#55d0ff"/><stop offset=".35" stop-color="#1a6fd8"/><stop offset=".62" stop-color="#0d3a9c"/><stop offset="1" stop-color="#1a3a88"/></radialGradient><linearGradient id="bh" x1="0" y1="0" x2="0" y2="1"><stop offset="0" stop-color="#fff" stop-opacity=".85"/><stop offset="1" stop-color="#fff" stop-opacity=".15"/></linearGradient></defs><circle cx="13" cy="13" r="12" fill="url(#bg1)" stroke="#2a4a8a" stroke-width="1"/><path d="M2.500 11a10.500 10.500 0 0 1 21 0c-6 3-15 3-21 0z" fill="url(#bh)" opacity=".55"/><path d="M6 13l6.500-6v3.700h7v4.600h-7V19z" fill="#fff" stroke="#1a3a7a" stroke-width=".6" stroke-linejoin="round"/></svg></div><div class="abs" style="left:37px;top:32px"><svg width="26" height="26" viewBox="0 0 26 26" style="display:block;"><defs><radialGradient id="fg1" cx=".5" cy=".8" r=".8"><stop offset="0" stop-color="#fff"/><stop offset=".6" stop-color="#f0f0f0"/><stop offset="1" stop-color="#d0d0d0"/></radialGradient></defs><circle cx="13" cy="13" r="11.500" fill="url(#fg1)" stroke="#8a8a8a" stroke-width="1.200"/><path d="M20 13l-6.500-6v3.700h-6v4.600h6V19z" fill="#fcfcfc" stroke="#e6e6e6" stroke-width=".7" stroke-linejoin="round"/></svg></div><div class="abs" style="left:66px;top:43px"><svg width="10" height="7" viewBox="0 0 10 7" style="display:block;"><defs><linearGradient id="ndg" x1="0" y1="0" x2="0" y2="1"><stop offset="0" stop-color="#5ab0ea"/><stop offset="1" stop-color="#1a5ab0"/></linearGradient></defs><path d="M.3 .8h9.400L5 6.500z" fill="url(#ndg)" stroke="#1f5fa8" stroke-width=".5"/></svg></div><div class="addr" style="left:78px;top:34px;width:618px"><div class="abs" style="left:3px;top:1px"><svg width="16" height="16" viewBox="0 0 16 16" style="display:block;"><g transform="translate(3.5,0) scale(0.95)"><path d="M0 1.200c1.500-.9 3-.9 4.300-.2v4C3 4.300 1.500 4.300 0 5.200z" fill="#e8502a"/><path d="M5 1.300c1.300.6 2.800.7 4.300-.2v4c-1.500.9-3 .8-4.300.2z" fill="#7cc02a"/><path d="M0 6c1.500-.9 3-.9 4.300-.2v4C3 9.100 1.500 9.100 0 10z" fill="#2a8fe8"/><path d="M5 6.100c1.300.6 2.800.7 4.300-.2v4c-1.500.9-3 .8-4.300.2z" fill="#fbc52a"/></g><path d="M1 10.500l1.500-2h11l1.500 2v4H1z" fill="#3a8ac0" stroke="#1f5a88" stroke-width=".7"/><rect x="1.500" y="11" width="13" height="3" fill="#5ab0d8"/><rect x="11.500" y="11.700" width="2" height="1.600" fill="#4fd04a"/><path d="M2.500 12.500h7" stroke="#2a6a98" stroke-width="1"/></svg></div><div class="tri" style="left:26px;top:7px"></div><div class="crumb" style="left:39.5px;width:53px;letter-spacing:0.039px">Computer</div><div class="tri" style="left:102.60000000000002px;top:7px"></div><div class="crumb" style="left:116.10000000000002px;width:73px;letter-spacing:-0.379px">Local Disk (C:)</div><div class="tri" style="left:199.20000000000005px;top:7px"></div><div class="abs" style="left:578px;top:9px;width:0;height:0;border-top:4px solid #0a0a52;border-left:3.500px solid transparent;border-right:3.500px solid transparent"></div><div class="abs" style="left:591px;top:0;width:1px;height:20px;background:rgba(90,94,100,.75)"></div><div class="abs" style="left:596px;top:2px"><svg width="16" height="16" viewBox="0 0 16 16" style="display:block;"><path d="M6.800 2c-1.700.7-2.500 2.500-2.500 5.500" stroke="#4a9ce0" stroke-width="2" fill="none"/><path d="M.9 7.200h7l-3.500 3.900z" fill="#2f72cc"/><path d="M11.500 9.500c0 2.700-.9 4.300-2.700 4.900" stroke="#26429c" stroke-width="2" fill="none"/><path d="M8 9.800h7l-3.500-3.600z" fill="#2a56c0"/></svg></div></div><div class="addr" style="left:702px;top:34px;width:102px"><div class="abs" style="left:8px;top:3px;font-style:italic;color:#858585;font-size:12px;white-space:nowrap;letter-spacing:-.35px">Search Loc...</div><div class="abs" style="left:81px;top:2px"><svg width="16" height="16" viewBox="0 0 16 16" style="display:block;"><circle cx="9.800" cy="6.300" r="3.500" fill="#dcecfb" stroke="#2a7ad8" stroke-width="1.700"/><path d="M7.200 9L3 13.300" stroke="#2a6ac8" stroke-width="2" stroke-linecap="round"/></svg></div></div><div class="client" style="left:7px;top:64px;width:798px;height:496px"><div class="cmd"><span style="left:18.5px"><span style="letter-spacing:-0.249px">Organize</span></span><div class="dn" style="left:71px;top:13px"></div><span style="left:109.5px"><span style="letter-spacing:-0.280px">Share with</span></span><div class="dn" style="left:170px;top:13px"></div><span style="left:208px"><span style="letter-spacing:0.024px">New folder</span></span><div class="abs" style="left:676px;top:8px"><svg width="17" height="14" viewBox="0 0 17 14" style="display:block;"><g fill="none" stroke="#5a6a8a" stroke-width=".8"><rect x=".5" y=".5" width="3" height="3"/><rect x=".5" y="5" width="3" height="3"/><rect x=".5" y="9.500" width="3" height="3"/></g><rect x="1.300" y="5.800" width="1.400" height="1.400" fill="#d05a3a"/><g stroke="#5a6478" stroke-width="1"><path d="M5.500 2h4M10.500 2h5M5.500 6.500h4M10.500 6.500h5M5.500 11h4M10.500 11h5"/></g></svg></div><div class="dn" style="left:702px;top:13px"></div><div class="abs" style="left:731px;top:7px"><svg width="17" height="16" viewBox="0 0 17 16" style="display:block;"><rect x=".5" y="1.500" width="15.500" height="13" fill="#fff" stroke="#5a6a88" stroke-width="1"/><rect x="10" y="2.500" width="5.500" height="11.500" fill="#7fc0ea"/><rect x="10" y="2.500" width="2" height="11.500" fill="#bfe2f8"/><path d="M.5 3.500h15.500" stroke="#5a6a88" stroke-width="1"/></svg></div><div class="abs" style="left:766px;top:6px"><svg width="18" height="18" viewBox="0 0 18 18" style="display:block;"><defs><radialGradient id="hg" cx=".5" cy=".3" r=".8"><stop offset="0" stop-color="#6a8ae8"/><stop offset=".6" stop-color="#2a4ac0"/><stop offset="1" stop-color="#1a2a88"/></radialGradient></defs><circle cx="9" cy="9" r="8.200" fill="url(#hg)" stroke="#8a96b8" stroke-width="1.200"/><text x="9" y="13.500" text-anchor="middle" font-family="Liberation Sans" font-weight="bold" font-size="13" fill="#fff">?</text></svg></div></div><div class="nav" style="height:412px"><div class="ni" style="top:9px"><div class="ic" style="left:20px;top:2px"><svg width="16" height="16" viewBox="0 0 16 16" style="display:block;"><path d="M8 .8l2.1 4.9 5.2.4-4 3.4 1.3 5.2L8 11.9l-4.6 2.8 1.3-5.2-4-3.4 5.2-.4z" fill="#fdc848" stroke="#e89a1c" stroke-width="1" stroke-linejoin="round"/><path d="M8 3.2l1.3 3 .9.1-2.2 1.5z" fill="#fff3c0" opacity=".8"/></svg></div><div class="tx" style="left:40.5px;top:4px"><span style="letter-spacing:-0.261px">Favorites</span></div></div><div class="ni" style="top:51px"><div class="ic" style="left:20px;top:2px"><svg width="16" height="16" viewBox="0 0 16 16" style="display:block;"><path d="M.8 2.800c0-.5.400-.9.900-.9h4.300l1.200 1.500h7c.5 0 .9.400.9.900v9.500H.8z" fill="#f3d66a" stroke="#cfa83c" stroke-width=".7"/><path d="M1.500 2.600h4.200l.8 1H1.500z" fill="#a8cc5a"/><path d="M1.300 5.500h13.400" stroke="#fdf0b4" stroke-width=".9"/><path d="M2.500 8.200c0-.6.500-1 1-1h9c.5 0 1 .4 1 1v6H2.500z" fill="#5aa6e6" stroke="#2f78c4" stroke-width=".7"/><path d="M3 8.600h10" stroke="#a8d4f8" stroke-width=".9"/><path d="M5 10.800h6v3.400H5z" fill="#eef6fd" stroke="#3a82cc" stroke-width=".6"/></svg></div><div class="tx" style="left:40.5px;top:4px"><span style="letter-spacing:-0.247px">Libraries</span></div></div><div class="ni" style="top:72px"><div class="ic" style="left:31px;top:2px"><svg width="16" height="16" viewBox="0 0 16 16" style="display:block;"><path d="M2.5 .5h8l3 3v12h-11z" fill="#fff" stroke="#8a95a3" stroke-width="1"/><path d="M10.5 .5v3h3" fill="#e4e9ef" stroke="#8a95a3" stroke-width=".8"/><rect x="6" y="4.5" width="3" height="3" fill="#4a7fd0"/><path d="M4.5 9.5h7M4.5 11.5h7M4.5 13.5h5" stroke="#9aa5b5" stroke-width="1"/></svg></div><div class="tx" style="left:50.5px;top:4px"><span style="letter-spacing:0.067px">Documents</span></div></div><div class="ni" style="top:93px"><div class="ic" style="left:31px;top:2px"><svg width="16" height="16" viewBox="0 0 16 16" style="display:block;"><path d="M9 1c1.5 2 4.5 2.500 4.500 6 0 1-.3 2-1 2.800.5-2.800-1.500-4-2.500-4.300V12.500c0 1.700-1.800 3-3.800 3S3 14.500 3 13s1.500-2.700 3.500-2.700c.6 0 1 .1 1.500.3V1z" fill="#2e8bdc" stroke="#1660a8" stroke-width=".6"/><ellipse cx="6" cy="12.500" rx="2" ry="1.200" fill="#7cc4f5" opacity=".7"/></svg></div><div class="tx" style="left:50.5px;top:4px"><span style="letter-spacing:0.093px">Music</span></div></div><div class="ni" style="top:114px"><div class="ic" style="left:31px;top:2px"><svg width="16" height="16" viewBox="0 0 16 16" style="display:block;"><rect x=".5" y="2.500" width="15" height="11.500" fill="#fff" stroke="#7c8794" stroke-width="1"/><rect x="2" y="4" width="12" height="8.500" fill="#7ec0ee"/><path d="M2 10.500c2-2.500 4-2.500 6-.8s4 .8 6-1.200v4H2z" fill="#3f9b4a"/><path d="M2 8c3-1 9-1 12 0V4H2z" fill="#bfe2f8"/></svg></div><div class="tx" style="left:50.5px;top:4px"><span style="letter-spacing:-0.156px">Pictures</span></div></div><div class="ni" style="top:135px"><div class="ic" style="left:31px;top:2px"><svg width="16" height="16" viewBox="0 0 16 16" style="display:block;"><rect x="1" y=".5" width="14" height="15" fill="#2b3644" stroke="#1a222c" stroke-width=".8"/><rect x="4" y="1.500" width="8" height="6" fill="#4f9de0"/><rect x="4" y="8.500" width="8" height="6" fill="#3c7fc8"/><path d="M4 5.500l3-2 2 1.500 3-2v4.500H4z" fill="#c8673a"/><path d="M4 13l2.500-2.500 2.500 2 3-2.500v4.500H4z" fill="#d87a3c"/><g fill="#dfe6ee"><rect x="1.800" y="1.500" width="1.400" height="1.400"/><rect x="1.800" y="4.300" width="1.400" height="1.400"/><rect x="1.800" y="7.100" width="1.400" height="1.400"/><rect x="1.800" y="9.900" width="1.400" height="1.400"/><rect x="1.800" y="12.700" width="1.400" height="1.400"/><rect x="12.800" y="1.500" width="1.400" height="1.400"/><rect x="12.800" y="4.300" width="1.400" height="1.400"/><rect x="12.800" y="7.100" width="1.400" height="1.400"/><rect x="12.800" y="9.900" width="1.400" height="1.400"/><rect x="12.800" y="12.700" width="1.400" height="1.400"/></g></svg></div><div class="tx" style="left:50.5px;top:4px"><span style="letter-spacing:-0.229px">Videos</span></div></div><div class="ni" style="top:177px"><div class="ic" style="left:20px;top:2px"><svg width="16" height="16" viewBox="0 0 16 16" style="display:block;"><circle cx="8.500" cy="4" r="3.300" fill="#3fa64a" stroke="#1f7030" stroke-width=".6"/><circle cx="4" cy="10" r="3.300" fill="#4a86d8" stroke="#2258a8" stroke-width=".6"/><circle cx="11.500" cy="11" r="3.600" fill="#2f5fc8" stroke="#1a3c90" stroke-width=".6"/><circle cx="7.600" cy="3" r="1.200" fill="#c8f0c8" opacity=".8"/><circle cx="3.200" cy="9" r="1.200" fill="#d4e6fb" opacity=".8"/><circle cx="10.500" cy="9.800" r="1.300" fill="#cfdcf8" opacity=".8"/></svg></div><div class="tx" style="left:40.5px;top:4px"><span style="letter-spacing:0.255px">Homegroup</span></div></div><div class="ni" style="top:219px"><div class="ic" style="left:20px;top:2px"><svg width="16" height="16" viewBox="0 0 16 16" style="display:block;"><rect x="4" y="1" width="11.500" height="9" fill="#e8edf2" stroke="#6a7686" stroke-width=".9"/><rect x="5.300" y="2.300" width="9" height="6.300" fill="#1c48c8"/><path d="M5.300 2.300h9v2.500c-3 0-6 1-9 2.500z" fill="#4f86ee"/><rect x="7.500" y="10.500" width="4.500" height="1.500" fill="#9aa5b3"/><rect x="5.500" y="12" width="8.500" height="1.500" fill="#c8d0da" stroke="#7c8896" stroke-width=".5"/><rect x=".5" y="5" width="3" height="9.500" fill="#dfe5ec" stroke="#6a7686" stroke-width=".8"/><rect x="1.200" y="6.500" width="1.600" height=".8" fill="#5a6a7a"/><rect x="1.200" y="12.300" width="1" height="1" fill="#3ec04a"/></svg></div><div class="tx" style="left:40.5px;top:4px"><span style="letter-spacing:0.189px">Computer</span></div></div><div class="ni sel" style="top:240px"><div class="ic" style="left:29px;top:1px"><svg width="16" height="16" viewBox="0 0 16 16" style="display:block;"><g transform="translate(3.5,0) scale(0.95)"><path d="M0 1.200c1.500-.9 3-.9 4.300-.2v4C3 4.300 1.500 4.300 0 5.200z" fill="#e8502a"/><path d="M5 1.300c1.300.6 2.800.7 4.300-.2v4c-1.500.9-3 .8-4.300.2z" fill="#7cc02a"/><path d="M0 6c1.500-.9 3-.9 4.300-.2v4C3 9.100 1.500 9.100 0 10z" fill="#2a8fe8"/><path d="M5 6.100c1.300.6 2.800.7 4.300-.2v4c-1.500.9-3 .8-4.300.2z" fill="#fbc52a"/></g><path d="M1 10.500l1.500-2h11l1.500 2v4H1z" fill="#3a8ac0" stroke="#1f5a88" stroke-width=".7"/><rect x="1.500" y="11" width="13" height="3" fill="#5ab0d8"/><rect x="11.500" y="11.700" width="2" height="1.600" fill="#4fd04a"/><path d="M2.500 12.500h7" stroke="#2a6a98" stroke-width="1"/></svg></div><div class="tx" style="left:48.5px;top:3px"><span style="letter-spacing:-0.245px">Local Disk (C:)</span></div></div><div class="ni" style="top:261px"><div class="ic" style="left:31px;top:2px"><svg width="16" height="16" viewBox="0 0 16 16" style="display:block;"><path d="M.8 9.500c0-1.500 1-2.500 2.500-2.500h9.400c1.500 0 2.500 1 2.500 2.500v2.500c0 1-.7 1.700-1.700 1.700h-11c-1 0-1.700-.7-1.700-1.700z" fill="#e6e9ec" stroke="#8a929c" stroke-width=".9"/><path d="M1.500 9.800h13" stroke="#fff" stroke-width="1"/><rect x="11" y="10.500" width="2.500" height="2" fill="#5ac83c" stroke="#3a8a28" stroke-width=".4"/><path d="M2.500 11.500h7" stroke="#b8bec6" stroke-width="1.200"/></svg></div><div class="tx" style="left:50.5px;top:4px"><span style="letter-spacing:-0.335px">Local Disk (E:)</span></div></div><div class="ni" style="top:282px"><div class="ic" style="left:31px;top:2px"><svg width="16" height="16" viewBox="0 0 16 16" style="display:block;"><path d="M11.300 .8L15.200 2.400v11.200L11.300 15.200 5.600 9.800 2.600 12.100.8 11.200V4.800l1.800-.9 3 2.300zM11.500 5.200L8.100 8l3.400 2.800zM2.800 6.300v3.400L4.700 8z" fill="#6a2a8a" fill-rule="evenodd"/></svg></div><div class="tx" style="left:50.5px;top:4px"><span style="letter-spacing:-0.417px">BD-ROM Drive (F:) TBE</span></div></div><div class="ni" style="top:303px"><div class="ic" style="left:31px;top:2px"><svg width="16" height="16" viewBox="0 0 16 16" style="display:block;"><path d="M1.500 1.500h13l.5 10.500H1z" fill="#3a4048" stroke="#1c2026" stroke-width=".8"/><path d="M1 12h14v2.500H1z" fill="#7a828c" stroke="#3a4048" stroke-width=".6"/><circle cx="8" cy="6.500" r="4.600" fill="#2a5fd8"/><path d="M8 1.900a4.600 4.600 0 0 1 4.600 4.600c-2 .5-3.500-.5-4.600-2s-2-2-3-.8A4.600 4.600 0 0 1 8 1.900z" fill="#bfe0f5"/><circle cx="9.500" cy="5" r="1.800" fill="#eaf6ff" opacity=".9"/><path d="M4 7l3 1.500-1 2.300A4.600 4.600 0 0 1 4 7z" fill="#1438a8"/></svg></div><div class="tx" style="left:50.5px;top:4px"><span style="letter-spacing:-0.556px">SAMSUNG (G:)</span></div></div><div class="ni" style="top:324px"><div class="ic" style="left:31px;top:2px"><svg width="16" height="16" viewBox="0 0 16 16" style="display:block;"><path d="M1 10.500c0-1.500 1.200-2.700 3-2.700h8c1.800 0 3 1.200 3 2.700v1.200c0 .8-.5 1.300-1.300 1.300H2.300c-.8 0-1.300-.5-1.300-1.300z" fill="#3a3a3c" stroke="#1a1a1c" stroke-width=".6"/><path d="M2.500 9.500c.5-.8 1.200-1 2-1h7c.8 0 1.500.2 2 1z" fill="#c8ccd0"/><rect x="11.500" y="10.800" width="2" height="1.200" fill="#8a8f96"/></svg></div><div class="tx" style="left:50.5px;top:4px"><span style="letter-spacing:-0.392px">Secure (Z:)</span></div></div><div class="ni" style="top:366px"><div class="ic" style="left:20px;top:2px"><svg width="16" height="16" viewBox="0 0 16 16" style="display:block;"><circle cx="5.500" cy="5.500" r="5" fill="#3a9ae0" stroke="#1f6ab0" stroke-width=".6"/><path d="M3 2c1.500-.5 3 0 3.500 1.500S5 6 3.500 6 1.500 4 3 2zM6 7.500c1-.5 2.500 0 2.500 1S7 10.500 6 10s-1-2 0-2.500z" fill="#4fc04a"/><rect x="7" y="6.500" width="8.500" height="6.500" fill="#e4e9ef" stroke="#5a6674" stroke-width=".8"/><rect x="8" y="7.500" width="6.500" height="4.500" fill="#1c48d0"/><path d="M8 7.500h6.500v1.500c-2 0-4.500.8-6.500 2z" fill="#4f86ee"/><rect x="10" y="13" width="2.500" height="1.500" fill="#8a95a3"/><rect x="8.500" y="14.500" width="5.500" height="1" fill="#b8c0ca"/></svg></div><div class="tx" style="left:40.5px;top:4px"><span style="letter-spacing:0.170px">Network</span></div></div></div><div class="navdiv" style="height:412px"></div><div class="list" style="width:626px;height:412px"><div class="hd" style="left:18px"><span style="letter-spacing:-0.003px">Name</span></div><div class="hd" style="left:279px"><span style="letter-spacing:0.074px">Date modified</span></div><div class="hd" style="left:399.5px"><span style="letter-spacing:-0.004px">Type</span></div><div class="hd" style="left:519.5px"><span style="letter-spacing:-0.836px">Size</span></div><div class="hdiv" style="left:272px"></div><div class="hdiv" style="left:392px"></div><div class="hdiv" style="left:512px"></div><div class="hdiv" style="left:592px"></div><div class="abs" style="left:138px;top:1px;width:0;height:0;border-bottom:4px solid #8fb2d6;border-left:4px solid transparent;border-right:4px solid transparent"></div><div class="row" style="top:31px"><div class="ic"><svg width="16" height="16" viewBox="0 0 16 16" style="display:block;"><defs><linearGradient id="fld1" x1="0" x2="1"><stop offset="0" stop-color="#efd777"/><stop offset=".35" stop-color="#f9eba4"/><stop offset=".7" stop-color="#f1db7c"/><stop offset="1" stop-color="#e8c95e"/></linearGradient></defs><path d="M7 .9l6.300-.3.300 14.200-6.600.6z" fill="#f1db80" stroke="#d8b64a" stroke-width=".7"/><path d="M11.300 1.200l1.600-.1.200 13.300-1.800.2z" fill="#e2c258" opacity=".7"/><path d="M1.300 2.100L7.200 1.400v14.200L1.300 15z" fill="url(#fld1)" stroke="#d6b34a" stroke-width=".7"/></svg></div><div class="nm"><span style="letter-spacing:-0.076px">Intel</span></div><div class="dt"><span style="letter-spacing:-0.315px">01/11/2017 00:58</span></div><div class="ty"><span style="letter-spacing:-0.126px">File folder</span></div></div><div class="row" style="top:52px"><div class="ic"><svg width="16" height="16" viewBox="0 0 16 16" style="display:block;"><defs><linearGradient id="fld1" x1="0" x2="1"><stop offset="0" stop-color="#efd777"/><stop offset=".35" stop-color="#f9eba4"/><stop offset=".7" stop-color="#f1db7c"/><stop offset="1" stop-color="#e8c95e"/></linearGradient></defs><path d="M7 .9l6.300-.3.300 14.200-6.600.6z" fill="#f1db80" stroke="#d8b64a" stroke-width=".7"/><path d="M11.300 1.200l1.600-.1.200 13.300-1.800.2z" fill="#e2c258" opacity=".7"/><path d="M1.300 2.100L7.200 1.400v14.200L1.300 15z" fill="url(#fld1)" stroke="#d6b34a" stroke-width=".7"/></svg></div><div class="nm"><span style="letter-spacing:-0.279px">PerfLogs</span></div><div class="dt"><span style="letter-spacing:-0.370px">14/07/2009 04:20</span></div><div class="ty"><span style="letter-spacing:-0.126px">File folder</span></div></div><div class="row" style="top:73px"><div class="ic"><svg width="16" height="16" viewBox="0 0 16 16" style="display:block;"><defs><linearGradient id="fld1" x1="0" x2="1"><stop offset="0" stop-color="#efd777"/><stop offset=".35" stop-color="#f9eba4"/><stop offset=".7" stop-color="#f1db7c"/><stop offset="1" stop-color="#e8c95e"/></linearGradient></defs><path d="M7 .9l6.300-.3.300 14.200-6.600.6z" fill="#f1db80" stroke="#d8b64a" stroke-width=".7"/><path d="M11.300 1.200l1.600-.1.200 13.300-1.800.2z" fill="#e2c258" opacity=".7"/><path d="M1.300 2.100L7.200 1.400v14.200L1.300 15z" fill="url(#fld1)" stroke="#d6b34a" stroke-width=".7"/></svg></div><div class="nm"><span style="letter-spacing:-0.222px">Program Files</span></div><div class="dt"><span style="letter-spacing:-0.315px">01/11/2017 07:01</span></div><div class="ty"><span style="letter-spacing:-0.126px">File folder</span></div></div><div class="row" style="top:94px"><div class="ic"><svg width="16" height="16" viewBox="0 0 16 16" style="display:block;"><defs><linearGradient id="fld1" x1="0" x2="1"><stop offset="0" stop-color="#efd777"/><stop offset=".35" stop-color="#f9eba4"/><stop offset=".7" stop-color="#f1db7c"/><stop offset="1" stop-color="#e8c95e"/></linearGradient></defs><path d="M7 .9l6.300-.3.300 14.200-6.600.6z" fill="#f1db80" stroke="#d8b64a" stroke-width=".7"/><path d="M11.300 1.200l1.600-.1.200 13.300-1.800.2z" fill="#e2c258" opacity=".7"/><path d="M1.300 2.100L7.200 1.400v14.200L1.300 15z" fill="url(#fld1)" stroke="#d6b34a" stroke-width=".7"/></svg></div><div class="nm"><span style="letter-spacing:-0.298px">Program Files (x86)</span></div><div class="dt"><span style="letter-spacing:-0.315px">01/11/2017 17:02</span></div><div class="ty"><span style="letter-spacing:-0.126px">File folder</span></div></div><div class="row" style="top:115px"><div class="ic"><svg width="16" height="16" viewBox="0 0 16 16" style="display:block;"><defs><linearGradient id="fld1" x1="0" x2="1"><stop offset="0" stop-color="#efd777"/><stop offset=".35" stop-color="#f9eba4"/><stop offset=".7" stop-color="#f1db7c"/><stop offset="1" stop-color="#e8c95e"/></linearGradient></defs><path d="M7 .9l6.300-.3.300 14.200-6.600.6z" fill="#f1db80" stroke="#d8b64a" stroke-width=".7"/><path d="M11.300 1.200l1.600-.1.200 13.300-1.800.2z" fill="#e2c258" opacity=".7"/><path d="M1.300 2.100L7.200 1.400v14.200L1.300 15z" fill="url(#fld1)" stroke="#d6b34a" stroke-width=".7"/></svg></div><div class="nm"><span style="letter-spacing:-0.384px">SVNProjects</span></div><div class="dt"><span style="letter-spacing:-0.315px">01/11/2017 02:14</span></div><div class="ty"><span style="letter-spacing:-0.126px">File folder</span></div></div><div class="row" style="top:136px"><div class="ic"><svg width="16" height="16" viewBox="0 0 16 16" style="display:block;"><defs><linearGradient id="fld1" x1="0" x2="1"><stop offset="0" stop-color="#efd777"/><stop offset=".35" stop-color="#f9eba4"/><stop offset=".7" stop-color="#f1db7c"/><stop offset="1" stop-color="#e8c95e"/></linearGradient></defs><path d="M7 .9l6.300-.3.300 14.200-6.600.6z" fill="#f1db80" stroke="#d8b64a" stroke-width=".7"/><path d="M11.300 1.200l1.600-.1.200 13.300-1.800.2z" fill="#e2c258" opacity=".7"/><path d="M1.300 2.100L7.200 1.400v14.200L1.300 15z" fill="url(#fld1)" stroke="#d6b34a" stroke-width=".7"/></svg></div><div class="nm"><span style="letter-spacing:-0.707px">Users</span></div><div class="dt"><span style="letter-spacing:-0.370px">31/10/2017 23:25</span></div><div class="ty"><span style="letter-spacing:-0.126px">File folder</span></div></div><div class="row" style="top:157px"><div class="ic"><svg width="16" height="16" viewBox="0 0 16 16" style="display:block;"><defs><linearGradient id="fld1" x1="0" x2="1"><stop offset="0" stop-color="#efd777"/><stop offset=".35" stop-color="#f9eba4"/><stop offset=".7" stop-color="#f1db7c"/><stop offset="1" stop-color="#e8c95e"/></linearGradient></defs><path d="M7 .9l6.300-.3.300 14.200-6.600.6z" fill="#f1db80" stroke="#d8b64a" stroke-width=".7"/><path d="M11.300 1.200l1.600-.1.200 13.300-1.800.2z" fill="#e2c258" opacity=".7"/><path d="M1.300 2.100L7.200 1.400v14.200L1.300 15z" fill="url(#fld1)" stroke="#d6b34a" stroke-width=".7"/></svg></div><div class="nm"><span style="letter-spacing:0.031px">Windows</span></div><div class="dt"><span style="letter-spacing:-0.315px">01/11/2017 06:14</span></div><div class="ty"><span style="letter-spacing:-0.126px">File folder</span></div></div></div><div class="det" style="top:443px"><div class="abs" style="left:18px;top:18px"><svg width="46" height="26" viewBox="0 0 46 26" style="display:block;"><defs><linearGradient id="bdt" x1="0" y1="0" x2="1" y2="1"><stop offset="0" stop-color="#f4f4f4"/><stop offset="1" stop-color="#c8c8c8"/></linearGradient><linearGradient id="bdf" x1="0" y1="0" x2="1" y2="0"><stop offset="0" stop-color="#1f5f8a"/><stop offset=".6" stop-color="#3a8aa4"/><stop offset="1" stop-color="#2a7a8a"/></linearGradient></defs><path d="M1 12.500L16 4.500l27 3-18 11z" fill="url(#bdt)" stroke="#b4b4b4" stroke-width=".5"/><ellipse cx="25" cy="8" rx="5" ry="1.600" fill="#c4c4c4"/><path d="M25 18.500l18-11v6.500l-18 10z" fill="#a6a6a6"/><path d="M1 12.500l24 6v5.500L2 18.200z" fill="url(#bdf)"/><path d="M21 17.700l3 .8v4.800l-3-.8z" fill="#4fd02a"/><g transform="translate(2.5,0.5) scale(1.45)"><path d="M0 1.200c1.500-.9 3-.9 4.300-.2v4C3 4.300 1.500 4.300 0 5.200z" fill="#e8502a"/><path d="M5 1.300c1.300.6 2.800.7 4.300-.2v4c-1.500.9-3 .8-4.300.2z" fill="#7cc02a"/><path d="M0 6c1.500-.9 3-.9 4.300-.2v4C3 9.100 1.500 9.100 0 10z" fill="#2a8fe8"/><path d="M5 6.100c1.300.6 2.800.7 4.300-.2v4c-1.500.9-3 .8-4.300.2z" fill="#fbc52a"/></g></svg></div><div class="tx"><span style="letter-spacing:0.028px">7 items</span></div></div></div></div>
<div id="menu"><div class="gut"></div><div class="mi" style="top:7px;letter-spacing:-0.119px">Desktop <u>W</u>allpaper</div><div class="mic" style="top:6px"><svg width="15" height="15" viewBox="0 0 16 16" style="display:block;"><rect x="1" y="1.700" width="14" height="10" rx=".8" fill="#fff" stroke="#2a6a82" stroke-width="1.400"/><path d="M5.500 12.500h5l.8 1.800h-6.600z" fill="#2a6a82"/><path d="M1.800 11V8.500L9 4.500l4 6.500z" fill="#f28c1a"/><path d="M8 7.500L13.800 1.200" stroke="#f28c1a" stroke-width="1.600"/><path d="M7.300 8.300l1-.3-.6-.6z" fill="#333"/></svg></div><div class="mi" style="top:31px;letter-spacing:-0.018px">Monitor Configuration</div><div class="mic" style="top:30px"><svg width="15" height="15" viewBox="0 0 16 16" style="display:block;"><rect x="1" y="1.700" width="14" height="10" rx=".8" fill="#f4f8fb" stroke="#2a6a82" stroke-width="1.400"/><path d="M5.500 12.500h5l.8 1.800h-6.600z" fill="#2a6a82"/><g fill="#f28c1a"><circle cx="4.500" cy="6.700" r="1"/><circle cx="11.500" cy="6.700" r="1"/><circle cx="8" cy="4.300" r=".9"/><circle cx="8" cy="9.100" r=".9"/><circle cx="8" cy="6.700" r=".6"/></g></svg></div><div class="msep" style="top:52px"></div><div class="mi" style="top:61px;letter-spacing:-0.113px">Desktop Wallpaper Settings</div><div class="mic" style="top:60px"><svg width="15" height="15" viewBox="0 0 16 16" style="display:block;"><rect x="1" y="1.700" width="14" height="10" rx=".8" fill="#fff" stroke="#2a6a82" stroke-width="1.400"/><path d="M5.500 12.500h5l.8 1.800h-6.600z" fill="#2a6a82"/><path d="M1.800 11V8.500L9 4.500l4 6.500z" fill="#f28c1a"/><path d="M8 7.500L13.800 1.200" stroke="#f28c1a" stroke-width="1.600"/><path d="M7.300 8.300l1-.3-.6-.6z" fill="#333"/></svg></div><div class="marr" style="top:64px"></div><div class="mi" style="top:85px;letter-spacing:-0.132px">Monitor Profiles</div><div class="mic" style="top:84px"><svg width="15" height="15" viewBox="0 0 16 16" style="display:block;"><defs><linearGradient id="mpg" x1="0" y1="0" x2="1" y2="1"><stop offset="0" stop-color="#fff"/><stop offset="1" stop-color="#d4dade"/></linearGradient></defs><rect x="1" y="1.700" width="14" height="10" rx=".8" fill="url(#mpg)" stroke="#2a6a82" stroke-width="1.400"/><path d="M5.500 12.500h5l.8 1.800h-6.600z" fill="#2a6a82"/></svg></div><div class="marr" style="top:88px"></div><div class="mi" style="top:109px;letter-spacing:-0.097px">Multi-Monitor <u>T</u>askbar</div><div class="mic" style="top:108px"><svg width="15" height="15" viewBox="0 0 16 16" style="display:block;"><rect x="0.500" y="7" width="9.500" height="3" rx=".8" fill="#1a5c7c"/><rect x="10.500" y="7.600" width="3.500" height="2" fill="#c4d4de"/></svg></div><div class="marr" style="top:112px"></div><div class="mi" style="top:133px;letter-spacing:-0.085px">Desktop Icons</div><div class="mic" style="top:132px"><svg width="15" height="15" viewBox="0 0 16 16" style="display:block;"><rect x=".5" y=".5" width="14" height="14" fill="#e8f2fa" stroke="#9cc0dc" stroke-width=".8"/><g fill="#a8cce8"><rect x="5.200" y="1.500" width="2.800" height="2.800"/><rect x="8.800" y="1.500" width="2.800" height="2.800"/><rect x="12" y="1.500" width="2" height="2.800"/><rect x="1.600" y="5" width="2.800" height="2.800"/><rect x="5.200" y="5" width="2.800" height="2.800"/><rect x="8.800" y="5" width="2.800" height="2.800"/><rect x="12" y="5" width="2" height="2.800"/><rect x="1.600" y="8.500" width="2.800" height="2.800"/><rect x="5.200" y="8.500" width="2.800" height="2.800"/><rect x="8.800" y="8.500" width="2.800" height="2.800"/><rect x="12" y="8.500" width="2" height="2.800"/><rect x="1.600" y="12" width="2.800" height="2"/><rect x="5.200" y="12" width="2.800" height="2"/><rect x="8.800" y="12" width="2.800" height="2"/></g><rect x="1.600" y="1.500" width="2.800" height="2.800" fill="#f28c1a"/></svg></div><div class="marr" style="top:136px"></div><div class="mi" style="top:157px;letter-spacing:-0.196px">Screen Saver</div><div class="mic" style="top:156px"><svg width="15" height="15" viewBox="0 0 16 16" style="display:block;"><rect x="1" y="1.700" width="14" height="10" rx=".8" fill="#5a646c" stroke="#2a6a82" stroke-width="1.400"/><path d="M5.500 12.500h5l.8 1.800h-6.600z" fill="#2a6a82"/><path d="M8.500 3.200a3.700 3.700 0 1 0 3.300 5.700A3.400 3.400 0 0 1 8.500 3.200z" fill="#eef2f5"/></svg></div><div class="marr" style="top:160px"></div><div class="mi" style="top:181px;letter-spacing:-0.031px"><u>S</u>ettings</div><div class="mic" style="top:180px"><svg width="15" height="15" viewBox="0 0 16 16" style="display:block;"><g transform="translate(6 10)" fill="#1f5f84"><rect x="-1.200" y="-5.400" width="2.400" height="3" transform="rotate(0)"/><rect x="-1.200" y="-5.400" width="2.400" height="3" transform="rotate(45)"/><rect x="-1.200" y="-5.400" width="2.400" height="3" transform="rotate(90)"/><rect x="-1.200" y="-5.400" width="2.400" height="3" transform="rotate(135)"/><rect x="-1.200" y="-5.400" width="2.400" height="3" transform="rotate(180)"/><rect x="-1.200" y="-5.400" width="2.400" height="3" transform="rotate(225)"/><rect x="-1.200" y="-5.400" width="2.400" height="3" transform="rotate(270)"/><rect x="-1.200" y="-5.400" width="2.400" height="3" transform="rotate(315)"/><circle r="3.900"/></g><circle cx="6" cy="10" r="1.500" fill="#f1f1f1"/><circle cx="11.800" cy="3.700" r="2.600" fill="#f5a04a"/><circle cx="11.800" cy="3.700" r="1.500" fill="#f28c1a"/></svg></div><div class="msep" style="top:202px"></div><div class="mi" style="top:211px;letter-spacing:-0.209px">Audio Devices</div><div class="mic" style="top:210px"><svg width="15" height="15" viewBox="0 0 16 16" style="display:block;"><path d="M4 5.500h2.500L10 2.300v11.400L6.500 10.500H4z" fill="#1a6a92"/><path d="M2.600 5.800c-.9 1.300-.9 3.100 0 4.400" stroke="#f5a55a" stroke-width="1.200" fill="none"/><path d="M11.500 5.500c.9 1.400.9 3.600 0 5" stroke="#f28c1a" stroke-width="1.300" fill="none"/><path d="M13.300 3.800c1.800 2.400 1.800 6 0 8.400" stroke="#f5a55a" stroke-width="1.300" fill="none"/></svg></div><div class="marr" style="top:214px"></div><div class="mi" style="top:235px;letter-spacing:-0.158px">Task <u>M</u>anager</div><div class="mic" style="top:234px"><svg width="15" height="15" viewBox="0 0 16 16" style="display:block;"><rect x="1" y="1.500" width="14" height="12" fill="#f4f5f6" stroke="#e2e4e6" stroke-width=".6"/><path d="M2 9.500l3-1.500 2.500 1.500 3-4 3.500-1" stroke="#f5b88a" stroke-width="1.300" fill="none"/><path d="M2 11.500l3-3 2.500 2 3-2.500 3.500-2.500" stroke="#9cc4dc" stroke-width="1.200" fill="none"/><path d="M2 13.500h12" stroke="#d4d8dc" stroke-width=".8"/></svg></div><div class="msep" style="top:256px"></div><div class="mi" style="top:265px;letter-spacing:-0.218px"><u>L</u>anguage</div><div class="mic" style="top:264px"><svg width="15" height="15" viewBox="0 0 16 16" style="display:block;"><rect x=".8" y=".8" width="9" height="9" rx=".8" fill="#f28c1a"/><text x="5.300" y="8.200" text-anchor="middle" font-size="8.500" font-weight="bold" fill="#fff" font-family="Liberation Sans, sans-serif">A</text><rect x="6.200" y="6.200" width="9.300" height="9.300" rx=".8" fill="#1f6a92" stroke="#f1f1f1" stroke-width=".8"/><text x="10.900" y="13.800" text-anchor="middle" font-size="7.500" fill="#fff" font-family="Noto Sans CJK SC, sans-serif">文</text></svg></div><div class="marr" style="top:268px"></div><div class="mi" style="top:289px;letter-spacing:-0.306px">Help</div><div class="mic" style="top:288px"><svg width="15" height="15" viewBox="0 0 16 16" style="display:block;"><circle cx="7.500" cy="8" r="7.200" fill="#0f5878"/><text x="7.500" y="12.300" text-anchor="middle" font-size="12" font-weight="bold" fill="#fff" font-family="Liberation Sans, sans-serif">?</text></svg></div><div class="mi" style="top:313px;letter-spacing:0.251px"><u>A</u>bout</div><div class="mic" style="top:312px"><svg width="15" height="15" viewBox="0 0 16 16" style="display:block;"><circle cx="7.500" cy="8" r="7.200" fill="#0f5878"/><rect x="6.300" y="6.600" width="2.400" height="6" fill="#fff"/><circle cx="7.500" cy="4.200" r="1.400" fill="#fff"/></svg></div><div class="msep" style="top:337px"></div><div class="mi" style="top:346px;font-size:13.600px;color:#e8283a;letter-spacing:0.098px">Organise Windows</div><div class="mic" style="top:347px"><svg width="15" height="15" viewBox="0 0 16 16" style="display:block;"><g fill="#141414"><rect x="0.3" y="0.5" width="4.100" height="4.100"/><rect x="5.4" y="0.5" width="4.100" height="4.100"/><rect x="10.5" y="0.5" width="4.100" height="4.100"/><rect x="0.3" y="5.6" width="4.100" height="4.100"/><rect x="5.4" y="5.6" width="4.100" height="4.100"/><rect x="10.5" y="5.6" width="4.100" height="4.100"/><rect x="0.3" y="10.7" width="4.100" height="4.100"/><rect x="5.4" y="10.7" width="4.100" height="4.100"/><rect x="10.5" y="10.7" width="4.100" height="4.100"/></g><g fill="#6a6a6a"><rect x="1.6" y="1.8" width="1.500" height="1.500"/><rect x="6.7" y="1.8" width="1.500" height="1.500"/><rect x="11.8" y="1.8" width="1.500" height="1.500"/><rect x="1.6" y="6.9" width="1.500" height="1.500"/><rect x="6.7" y="6.9" width="1.500" height="1.500"/><rect x="11.8" y="6.9" width="1.500" height="1.500"/><rect x="1.6" y="12.0" width="1.500" height="1.500"/><rect x="6.7" y="12.0" width="1.500" height="1.500"/><rect x="11.8" y="12.0" width="1.500" height="1.500"/></g></svg></div><div class="marr" style="top:351px"></div><div class="msep" style="top:372px"></div><div class="mi" style="top:381px;letter-spacing:0.066px">Exit</div><div class="mic" style="top:380px"><svg width="15" height="15" viewBox="0 0 16 16" style="display:block;"><rect x="7" y="1" width="6" height="14" fill="#1f6a8c" stroke="#f5a55a" stroke-width=".9"/><path d="M.5 8h6.500M4.500 4.800L8 8l-3.500 3.200" stroke="#f28c1a" stroke-width="2" fill="none"/><circle cx="11" cy="8.200" r=".7" fill="#fff"/></svg></div></div>
<div id="sub"><div class="sic" style="top:2px"><svg width="15" height="15" viewBox="-0.7 -0.7 15 15" style="display:block;"><rect x="0.00" y="0.00" width="13.60" height="5.85" fill="#757575" stroke="#242424" stroke-width="1.150"/><rect x="0.00" y="7.55" width="13.60" height="5.85" fill="#757575" stroke="#242424" stroke-width="1.150"/></svg></div><div class="si" style="top:2.5px">[1x2] - 2 Slots</div><div class="sic" style="top:21px"><svg width="15" height="15" viewBox="-0.7 -0.7 15 15" style="display:block;"><rect x="0.00" y="0.00" width="5.95" height="13.40" fill="#757575" stroke="#242424" stroke-width="1.150"/><rect x="7.65" y="0.00" width="5.95" height="13.40" fill="#757575" stroke="#242424" stroke-width="1.150"/></svg></div><div class="si" style="top:21.5px">[2x1] - 2 Slots</div><div class="sic" style="top:40px"><svg width="15" height="15" viewBox="-0.7 -0.7 15 15" style="display:block;"><rect x="0.00" y="0.00" width="5.95" height="5.85" fill="#757575" stroke="#242424" stroke-width="1.150"/><rect x="7.65" y="0.00" width="5.95" height="5.85" fill="#757575" stroke="#242424" stroke-width="1.150"/><rect x="0.00" y="7.55" width="5.95" height="5.85" fill="#757575" stroke="#242424" stroke-width="1.150"/><rect x="7.65" y="7.55" width="5.95" height="5.85" fill="#757575" stroke="#242424" stroke-width="1.150"/></svg></div><div class="si" style="top:40.5px">[2x2] - 4 slots</div><div class="sic" style="top:59px"><svg width="15" height="15" viewBox="-0.7 -0.7 15 15" style="display:block;"><rect x="0.00" y="0.00" width="3.40" height="5.85" fill="#757575" stroke="#242424" stroke-width="1.150"/><rect x="5.10" y="0.00" width="3.40" height="5.85" fill="#757575" stroke="#242424" stroke-width="1.150"/><rect x="10.20" y="0.00" width="3.40" height="5.85" fill="#757575" stroke="#242424" stroke-width="1.150"/><rect x="0.00" y="7.55" width="3.40" height="5.85" fill="#757575" stroke="#242424" stroke-width="1.150"/><rect x="5.10" y="7.55" width="3.40" height="5.85" fill="#757575" stroke="#242424" stroke-width="1.150"/><rect x="10.20" y="7.55" width="3.40" height="5.85" fill="#757575" stroke="#242424" stroke-width="1.150"/></svg></div><div class="si" style="top:59.5px">[3x2] - 6 slots</div><div class="sic" style="top:78px"><svg width="15" height="15" viewBox="-0.7 -0.7 15 15" style="display:block;"><rect x="0.00" y="0.00" width="5.95" height="3.33" fill="#757575" stroke="#242424" stroke-width="1.150"/><rect x="7.65" y="0.00" width="5.95" height="3.33" fill="#757575" stroke="#242424" stroke-width="1.150"/><rect x="0.00" y="5.03" width="5.95" height="3.33" fill="#757575" stroke="#242424" stroke-width="1.150"/><rect x="7.65" y="5.03" width="5.95" height="3.33" fill="#757575" stroke="#242424" stroke-width="1.150"/><rect x="0.00" y="10.07" width="5.95" height="3.33" fill="#757575" stroke="#242424" stroke-width="1.150"/><rect x="7.65" y="10.07" width="5.95" height="3.33" fill="#757575" stroke="#242424" stroke-width="1.150"/></svg></div><div class="si" style="top:78.5px">[2x3] - 6 slots</div><div class="sic" style="top:97px"><svg width="15" height="15" viewBox="-0.7 -0.7 15 15" style="display:block;"><rect x="0.00" y="0.00" width="3.40" height="3.33" fill="#757575" stroke="#242424" stroke-width="1.150"/><rect x="5.10" y="0.00" width="3.40" height="3.33" fill="#757575" stroke="#242424" stroke-width="1.150"/><rect x="10.20" y="0.00" width="3.40" height="3.33" fill="#757575" stroke="#242424" stroke-width="1.150"/><rect x="0.00" y="5.03" width="3.40" height="3.33" fill="#757575" stroke="#242424" stroke-width="1.150"/><rect x="5.10" y="5.03" width="3.40" height="3.33" fill="#757575" stroke="#242424" stroke-width="1.150"/><rect x="10.20" y="5.03" width="3.40" height="3.33" fill="#757575" stroke="#242424" stroke-width="1.150"/><rect x="0.00" y="10.07" width="3.40" height="3.33" fill="#757575" stroke="#242424" stroke-width="1.150"/><rect x="5.10" y="10.07" width="3.40" height="3.33" fill="#757575" stroke="#242424" stroke-width="1.150"/><rect x="10.20" y="10.07" width="3.40" height="3.33" fill="#757575" stroke="#242424" stroke-width="1.150"/></svg></div><div class="si" style="top:97.5px">[3x3] - 9 slots</div><div class="abs" style="left:14.5px;top:115px;font-size:11px;white-space:nowrap;color:#1a1a1a">Custom Arrangement</div></div>
<div id="bottomline"></div>
</body></html>
